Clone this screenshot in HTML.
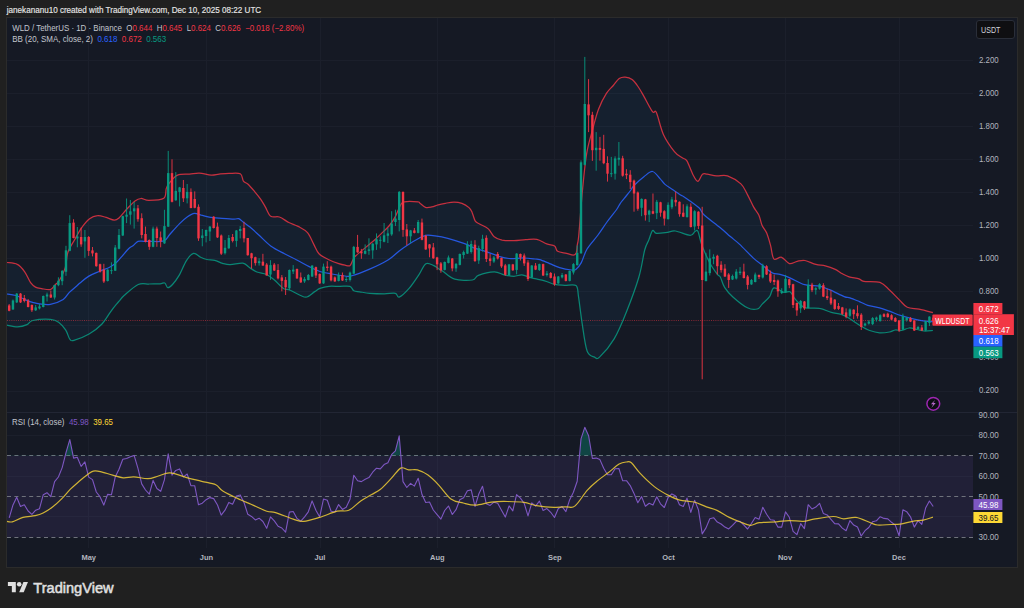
<!DOCTYPE html>
<html><head><meta charset="utf-8"><style>
html,body{margin:0;padding:0;background:#202020;width:1024px;height:608px;overflow:hidden}
svg{position:absolute;left:0;top:0;font-family:"Liberation Sans", sans-serif}
text{white-space:pre}
</style></head><body>
<svg width="1024" height="608" viewBox="0 0 1024 608">
<rect x="6.5" y="17.5" width="1011" height="550" fill="#151924" stroke="#2b2b2b" stroke-width="1"/>
<line x1="88.5" y1="18" x2="88.5" y2="548" stroke="#1b1f2b" stroke-width="1"/>
<line x1="206.5" y1="18" x2="206.5" y2="548" stroke="#1b1f2b" stroke-width="1"/>
<line x1="320.5" y1="18" x2="320.5" y2="548" stroke="#1b1f2b" stroke-width="1"/>
<line x1="437.5" y1="18" x2="437.5" y2="548" stroke="#1b1f2b" stroke-width="1"/>
<line x1="554.5" y1="18" x2="554.5" y2="548" stroke="#1b1f2b" stroke-width="1"/>
<line x1="668.5" y1="18" x2="668.5" y2="548" stroke="#1b1f2b" stroke-width="1"/>
<line x1="785.5" y1="18" x2="785.5" y2="548" stroke="#1b1f2b" stroke-width="1"/>
<line x1="899.5" y1="18" x2="899.5" y2="548" stroke="#1b1f2b" stroke-width="1"/>
<line x1="7" y1="391.5" x2="973" y2="391.5" stroke="#1b1f2b" stroke-width="1"/>
<line x1="7" y1="358.5" x2="973" y2="358.5" stroke="#1b1f2b" stroke-width="1"/>
<line x1="7" y1="325.5" x2="973" y2="325.5" stroke="#1b1f2b" stroke-width="1"/>
<line x1="7" y1="291.5" x2="973" y2="291.5" stroke="#1b1f2b" stroke-width="1"/>
<line x1="7" y1="258.5" x2="973" y2="258.5" stroke="#1b1f2b" stroke-width="1"/>
<line x1="7" y1="225.5" x2="973" y2="225.5" stroke="#1b1f2b" stroke-width="1"/>
<line x1="7" y1="192.5" x2="973" y2="192.5" stroke="#1b1f2b" stroke-width="1"/>
<line x1="7" y1="159.5" x2="973" y2="159.5" stroke="#1b1f2b" stroke-width="1"/>
<line x1="7" y1="126.5" x2="973" y2="126.5" stroke="#1b1f2b" stroke-width="1"/>
<line x1="7" y1="93.5" x2="973" y2="93.5" stroke="#1b1f2b" stroke-width="1"/>
<line x1="7" y1="60.5" x2="973" y2="60.5" stroke="#1b1f2b" stroke-width="1"/>
<line x1="7" y1="435.5" x2="973" y2="435.5" stroke="#1b1f2b" stroke-width="1"/>
<line x1="7" y1="476.5" x2="973" y2="476.5" stroke="#1b1f2b" stroke-width="1"/>
<line x1="7" y1="516.5" x2="973" y2="516.5" stroke="#1b1f2b" stroke-width="1"/>
<line x1="7" y1="412.5" x2="1017" y2="412.5" stroke="#222634" stroke-width="1"/>
<polygon points="7.0,262.5 17.3,264.4 24.7,271.8 30.6,282.7 35.5,287.1 41.5,288.6 50.3,289.6 55.3,284.7 59.2,280.7 65.2,267.9 67.9,252.3 74.8,239.4 81.7,227.6 89.6,218.7 97.5,215.7 105.4,217.2 114.3,220.2 119.2,217.7 127.1,208.8 135.0,200.9 141.0,198.5 148.8,200.4 163.8,198.3 166.3,188.4 169.7,182.5 177.6,175.1 189.5,174.1 199.4,173.1 211.2,175.1 219.1,174.1 229.0,173.4 240.3,173.8 243.4,181.1 248.1,184.2 254.4,191.3 260.6,199.1 265.3,206.9 270.8,216.3 279.4,217.0 288.8,222.5 298.1,226.4 307.5,232.7 313.8,244.4 319.0,253.8 328.9,259.7 338.8,263.6 345.0,265.1 349.9,265.7 352.8,260.2 355.8,255.8 369.6,244.2 374.6,240.0 381.5,233.4 389.4,225.5 395.3,216.6 400.2,205.7 404.2,201.8 418.0,201.8 420.0,203.3 425.5,207.3 431.8,206.9 438.2,204.9 445.3,203.3 454.0,202.0 461.9,203.3 469.0,207.6 472.1,212.4 475.3,221.1 480.0,224.2 488.3,228.9 494.2,236.8 502.1,240.2 514.0,240.7 525.8,239.7 536.8,239.4 546.7,243.9 554.6,245.9 557.6,251.3 566.5,253.3 573.4,255.2 576.3,252.8 577.3,244.9 578.8,235.0 582.5,190.0 586.7,153.3 592.6,129.6 598.5,109.2 606.4,93.4 613.3,85.5 619.2,78.6 625.2,77.1 632.1,79.6 638.0,86.5 643.9,96.4 652.5,111.7 656.4,112.5 663.4,134.4 674.4,151.6 682.2,157.8 686.9,160.9 693.1,175.0 697.8,181.3 702.5,174.2 707.2,174.2 716.6,175.8 727.5,175.8 740.9,183.9 747.2,194.1 753.4,206.6 758.9,215.2 762.0,225.3 766.7,233.1 770.6,245.6 773.8,258.9 781.6,257.3 789.4,263.6 797.2,261.3 805.0,260.5 815.9,264.4 825.3,265.9 834.7,269.1 842.5,273.8 849.1,276.8 859.0,278.8 863.9,281.3 880.0,282.3 889.5,290.0 899.4,299.9 907.3,307.3 919.1,309.2 932.9,312.7 932.9,330.5 924.0,331.0 917.1,329.5 909.2,328.0 901.3,330.5 895.4,330.0 889.5,332.0 879.6,332.9 869.7,330.5 859.9,325.5 849.1,318.3 841.2,314.4 831.3,312.4 819.5,308.4 805.7,307.9 799.7,304.0 794.8,298.6 790.0,291.8 783.8,292.3 773.9,287.9 769.6,296.7 762.2,304.1 757.3,309.0 747.4,307.8 732.6,296.7 724.6,287.4 720.3,277.0 717.6,274.6 709.7,262.7 701.9,245.3 698.0,231.5 695.0,231.5 690.1,235.4 675.3,231.0 667.4,232.4 656.5,233.4 652.6,230.5 648.8,240.0 644.7,250.0 638.9,277.0 626.6,311.5 614.3,338.6 599.5,357.1 594.5,357.1 587.1,351.0 582.2,323.8 578.5,296.7 576.0,285.6 564.5,285.3 554.6,284.4 544.7,280.9 535.0,278.7 529.8,277.3 521.9,274.8 514.0,276.3 504.1,274.8 494.2,271.8 478.4,275.3 472.5,280.0 454.7,279.2 442.9,271.3 440.0,269.6 433.8,265.7 425.9,263.7 419.0,274.6 409.1,288.4 399.2,297.1 395.3,293.3 384.4,293.8 369.6,293.3 359.7,291.8 353.8,290.8 349.9,286.4 340.0,286.4 328.9,286.3 320.0,288.4 314.7,291.6 306.9,297.0 300.6,295.5 289.7,290.0 283.4,288.4 274.1,279.8 266.3,274.4 256.9,272.0 249.1,267.3 242.8,263.1 230.3,264.7 222.5,263.4 214.7,260.3 206.9,259.5 200.6,257.2 193.6,253.3 186.6,260.3 178.8,275.9 172.5,284.5 167.8,287.7 164.7,283.0 160.0,283.8 149.1,284.0 138.2,284.5 124.4,295.3 119.6,300.6 116.5,304.2 110.2,312.3 102.0,324.0 89.1,334.0 73.9,340.4 69.8,339.2 65.6,329.9 58.6,322.2 50.4,319.3 32.8,320.5 27.0,324.6 17.6,326.9 7.0,325.2" fill="#2196f3" fill-opacity="0.06"/>
<line x1="7" y1="320.5" x2="973" y2="320.5" stroke="#f23645" stroke-width="1" stroke-dasharray="1 1.2" opacity="0.5"/>
<path d="M7.0,262.5 C8.7,262.8 14.4,262.8 17.3,264.4 C20.2,265.9 22.5,268.8 24.7,271.8 C26.9,274.9 28.8,280.1 30.6,282.7 C32.4,285.2 33.7,286.1 35.5,287.1 C37.3,288.1 39.0,288.2 41.5,288.6 C44.0,289.0 48.0,290.2 50.3,289.6 C52.6,289.0 53.8,286.2 55.3,284.7 C56.8,283.2 57.6,283.5 59.2,280.7 C60.9,277.9 63.8,272.6 65.2,267.9 C66.7,263.2 66.3,257.1 67.9,252.3 C69.5,247.6 72.5,243.5 74.8,239.4 C77.1,235.3 79.2,231.1 81.7,227.6 C84.2,224.1 87.0,220.7 89.6,218.7 C92.2,216.7 94.9,215.9 97.5,215.7 C100.1,215.4 102.6,216.4 105.4,217.2 C108.2,217.9 112.0,220.1 114.3,220.2 C116.6,220.3 117.1,219.6 119.2,217.7 C121.3,215.8 124.5,211.6 127.1,208.8 C129.7,206.0 132.7,202.6 135.0,200.9 C137.3,199.2 138.7,198.6 141.0,198.5 C143.3,198.4 145.0,200.4 148.8,200.4 C152.6,200.4 160.9,200.3 163.8,198.3 C166.7,196.3 165.3,191.0 166.3,188.4 C167.3,185.8 167.8,184.7 169.7,182.5 C171.6,180.3 174.3,176.5 177.6,175.1 C180.9,173.7 185.9,174.4 189.5,174.1 C193.1,173.8 195.8,172.9 199.4,173.1 C203.0,173.3 207.9,174.9 211.2,175.1 C214.5,175.3 216.1,174.4 219.1,174.1 C222.1,173.8 225.5,173.4 229.0,173.4 C232.5,173.4 237.9,172.5 240.3,173.8 C242.7,175.1 242.1,179.4 243.4,181.1 C244.7,182.8 246.3,182.5 248.1,184.2 C249.9,185.9 252.3,188.8 254.4,191.3 C256.5,193.8 258.8,196.5 260.6,199.1 C262.4,201.7 263.6,204.0 265.3,206.9 C267.0,209.8 268.5,214.6 270.8,216.3 C273.1,218.0 276.4,216.0 279.4,217.0 C282.4,218.0 285.7,220.9 288.8,222.5 C291.9,224.1 295.0,224.7 298.1,226.4 C301.2,228.1 304.9,229.7 307.5,232.7 C310.1,235.7 311.9,240.9 313.8,244.4 C315.7,247.9 316.5,251.2 319.0,253.8 C321.5,256.4 325.6,258.1 328.9,259.7 C332.2,261.3 336.1,262.7 338.8,263.6 C341.5,264.5 343.1,264.8 345.0,265.1 C346.9,265.5 348.6,266.5 349.9,265.7 C351.2,264.9 351.8,261.8 352.8,260.2 C353.8,258.6 353.0,258.5 355.8,255.8 C358.6,253.1 366.5,246.8 369.6,244.2 C372.7,241.6 372.6,241.8 374.6,240.0 C376.6,238.2 379.0,235.8 381.5,233.4 C384.0,231.0 387.1,228.3 389.4,225.5 C391.7,222.7 393.5,219.9 395.3,216.6 C397.1,213.3 398.7,208.2 400.2,205.7 C401.7,203.2 401.2,202.5 404.2,201.8 C407.2,201.2 415.4,201.6 418.0,201.8 C420.6,202.1 418.8,202.4 420.0,203.3 C421.2,204.2 423.5,206.7 425.5,207.3 C427.5,207.9 429.7,207.3 431.8,206.9 C433.9,206.5 435.9,205.5 438.2,204.9 C440.4,204.3 442.7,203.8 445.3,203.3 C447.9,202.8 451.2,202.0 454.0,202.0 C456.8,202.0 459.4,202.4 461.9,203.3 C464.4,204.2 467.3,206.1 469.0,207.6 C470.7,209.1 471.1,210.2 472.1,212.4 C473.2,214.7 474.0,219.1 475.3,221.1 C476.6,223.1 477.8,222.9 480.0,224.2 C482.2,225.5 485.9,226.8 488.3,228.9 C490.7,231.0 491.9,234.9 494.2,236.8 C496.5,238.7 498.8,239.5 502.1,240.2 C505.4,240.8 510.1,240.8 514.0,240.7 C518.0,240.6 522.0,239.9 525.8,239.7 C529.6,239.5 533.3,238.7 536.8,239.4 C540.3,240.1 543.7,242.8 546.7,243.9 C549.7,245.0 552.8,244.7 554.6,245.9 C556.4,247.1 555.6,250.1 557.6,251.3 C559.6,252.5 563.9,252.7 566.5,253.3 C569.1,254.0 571.8,255.3 573.4,255.2 C575.0,255.1 575.6,254.5 576.3,252.8 C576.9,251.1 576.9,247.9 577.3,244.9 C577.7,241.9 577.9,244.2 578.8,235.0 C579.7,225.8 581.2,203.6 582.5,190.0 C583.8,176.4 585.0,163.4 586.7,153.3 C588.4,143.2 590.6,136.9 592.6,129.6 C594.6,122.2 596.2,115.2 598.5,109.2 C600.8,103.2 603.9,97.4 606.4,93.4 C608.9,89.5 611.2,88.0 613.3,85.5 C615.4,83.0 617.2,80.0 619.2,78.6 C621.2,77.2 623.1,76.9 625.2,77.1 C627.4,77.3 630.0,78.0 632.1,79.6 C634.2,81.2 636.0,83.7 638.0,86.5 C640.0,89.3 641.5,92.2 643.9,96.4 C646.3,100.6 650.4,109.0 652.5,111.7 C654.6,114.4 654.6,108.7 656.4,112.5 C658.2,116.3 660.4,127.9 663.4,134.4 C666.4,140.9 671.3,147.7 674.4,151.6 C677.5,155.5 680.1,156.2 682.2,157.8 C684.3,159.4 685.1,158.0 686.9,160.9 C688.7,163.8 691.3,171.6 693.1,175.0 C694.9,178.4 696.2,181.4 697.8,181.3 C699.4,181.2 700.9,175.4 702.5,174.2 C704.1,173.0 704.9,173.9 707.2,174.2 C709.6,174.5 713.2,175.5 716.6,175.8 C720.0,176.1 723.5,174.5 727.5,175.8 C731.5,177.2 737.6,180.9 740.9,183.9 C744.2,186.9 745.1,190.3 747.2,194.1 C749.3,197.9 751.5,203.1 753.4,206.6 C755.3,210.1 757.5,212.1 758.9,215.2 C760.3,218.3 760.7,222.3 762.0,225.3 C763.3,228.3 765.3,229.7 766.7,233.1 C768.1,236.5 769.4,241.3 770.6,245.6 C771.8,249.9 772.0,256.9 773.8,258.9 C775.6,260.8 779.0,256.5 781.6,257.3 C784.2,258.1 786.8,262.9 789.4,263.6 C792.0,264.3 794.6,261.8 797.2,261.3 C799.8,260.8 801.9,260.0 805.0,260.5 C808.1,261.0 812.5,263.5 815.9,264.4 C819.3,265.3 822.2,265.1 825.3,265.9 C828.4,266.7 831.8,267.8 834.7,269.1 C837.6,270.4 840.1,272.5 842.5,273.8 C844.9,275.1 846.4,276.0 849.1,276.8 C851.9,277.6 856.5,278.1 859.0,278.8 C861.5,279.6 860.4,280.7 863.9,281.3 C867.4,281.9 875.7,280.9 880.0,282.3 C884.3,283.8 886.3,287.1 889.5,290.0 C892.7,292.9 896.4,297.0 899.4,299.9 C902.4,302.8 904.0,305.8 907.3,307.3 C910.6,308.9 914.8,308.3 919.1,309.2 C923.4,310.1 930.6,312.1 932.9,312.7" fill="none" stroke="#f23645" stroke-opacity="0.8" stroke-width="1.25" stroke-linejoin="round"/>
<path d="M7.0,325.2 C8.8,325.5 14.3,327.0 17.6,326.9 C20.9,326.8 24.5,325.7 27.0,324.6 C29.5,323.5 28.9,321.4 32.8,320.5 C36.7,319.6 46.1,319.0 50.4,319.3 C54.7,319.6 56.1,320.4 58.6,322.2 C61.1,324.0 63.7,327.1 65.6,329.9 C67.5,332.7 68.4,337.4 69.8,339.2 C71.2,340.9 70.7,341.3 73.9,340.4 C77.1,339.5 84.4,336.7 89.1,334.0 C93.8,331.3 98.5,327.6 102.0,324.0 C105.5,320.4 107.8,315.6 110.2,312.3 C112.6,309.0 114.9,306.1 116.5,304.2 C118.1,302.2 118.3,302.1 119.6,300.6 C120.9,299.1 121.3,298.0 124.4,295.3 C127.5,292.6 134.1,286.4 138.2,284.5 C142.3,282.6 145.5,284.1 149.1,284.0 C152.7,283.9 157.4,284.0 160.0,283.8 C162.6,283.6 163.4,282.4 164.7,283.0 C166.0,283.6 166.5,287.4 167.8,287.7 C169.1,287.9 170.7,286.5 172.5,284.5 C174.3,282.5 176.5,279.9 178.8,275.9 C181.2,271.9 184.1,264.1 186.6,260.3 C189.1,256.5 191.3,253.8 193.6,253.3 C195.9,252.8 198.4,256.2 200.6,257.2 C202.8,258.2 204.6,259.0 206.9,259.5 C209.2,260.0 212.1,259.7 214.7,260.3 C217.3,260.9 219.9,262.7 222.5,263.4 C225.1,264.1 226.9,264.8 230.3,264.7 C233.7,264.6 239.7,262.7 242.8,263.1 C245.9,263.5 246.8,265.8 249.1,267.3 C251.4,268.8 254.0,270.8 256.9,272.0 C259.8,273.2 263.4,273.1 266.3,274.4 C269.2,275.7 271.2,277.5 274.1,279.8 C277.0,282.1 280.8,286.7 283.4,288.4 C286.0,290.1 286.8,288.8 289.7,290.0 C292.6,291.2 297.7,294.3 300.6,295.5 C303.5,296.7 304.5,297.6 306.9,297.0 C309.2,296.4 312.5,293.0 314.7,291.6 C316.9,290.2 317.6,289.3 320.0,288.4 C322.4,287.5 325.6,286.6 328.9,286.3 C332.2,286.0 336.5,286.4 340.0,286.4 C343.5,286.4 347.6,285.7 349.9,286.4 C352.2,287.1 352.2,289.9 353.8,290.8 C355.4,291.7 357.1,291.4 359.7,291.8 C362.3,292.2 365.5,293.0 369.6,293.3 C373.7,293.6 380.1,293.8 384.4,293.8 C388.7,293.8 392.8,292.8 395.3,293.3 C397.8,293.9 396.9,297.9 399.2,297.1 C401.5,296.3 405.8,292.1 409.1,288.4 C412.4,284.6 416.2,278.7 419.0,274.6 C421.8,270.5 423.4,265.2 425.9,263.7 C428.4,262.2 431.4,264.7 433.8,265.7 C436.2,266.7 438.5,268.7 440.0,269.6 C441.5,270.5 440.4,269.7 442.9,271.3 C445.3,272.9 449.8,277.8 454.7,279.2 C459.6,280.6 468.6,280.6 472.5,280.0 C476.4,279.4 474.8,276.7 478.4,275.3 C482.0,273.9 489.9,271.9 494.2,271.8 C498.5,271.7 500.8,274.1 504.1,274.8 C507.4,275.6 511.0,276.3 514.0,276.3 C517.0,276.3 519.3,274.6 521.9,274.8 C524.5,275.0 527.6,276.7 529.8,277.3 C532.0,277.9 532.5,278.1 535.0,278.7 C537.5,279.3 541.4,279.9 544.7,280.9 C548.0,281.8 551.3,283.7 554.6,284.4 C557.9,285.1 560.9,285.1 564.5,285.3 C568.1,285.5 573.7,283.7 576.0,285.6 C578.3,287.5 577.5,290.3 578.5,296.7 C579.5,303.1 580.8,314.8 582.2,323.8 C583.6,332.9 585.1,345.4 587.1,351.0 C589.1,356.6 592.4,356.1 594.5,357.1 C596.6,358.1 596.2,360.2 599.5,357.1 C602.8,354.0 609.8,346.2 614.3,338.6 C618.8,331.0 622.5,321.8 626.6,311.5 C630.7,301.2 635.9,287.2 638.9,277.0 C641.9,266.8 643.1,256.2 644.7,250.0 C646.4,243.8 647.5,243.2 648.8,240.0 C650.1,236.8 651.3,231.6 652.6,230.5 C653.9,229.4 654.0,233.1 656.5,233.4 C659.0,233.7 664.3,232.8 667.4,232.4 C670.5,232.0 671.5,230.5 675.3,231.0 C679.1,231.5 686.8,235.3 690.1,235.4 C693.4,235.5 693.7,232.2 695.0,231.5 C696.3,230.8 696.9,229.2 698.0,231.5 C699.1,233.8 699.9,240.1 701.9,245.3 C703.9,250.5 707.1,257.8 709.7,262.7 C712.3,267.6 715.8,272.2 717.6,274.6 C719.4,277.0 719.1,274.9 720.3,277.0 C721.5,279.1 722.5,284.1 724.6,287.4 C726.7,290.7 728.8,293.3 732.6,296.7 C736.4,300.1 743.3,305.8 747.4,307.8 C751.5,309.9 754.8,309.6 757.3,309.0 C759.8,308.4 760.2,306.2 762.2,304.1 C764.2,302.1 767.7,299.4 769.6,296.7 C771.5,294.0 771.5,288.6 773.9,287.9 C776.3,287.2 781.1,291.6 783.8,292.3 C786.5,293.0 788.2,290.8 790.0,291.8 C791.8,292.9 793.2,296.6 794.8,298.6 C796.4,300.6 797.9,302.4 799.7,304.0 C801.5,305.6 802.4,307.2 805.7,307.9 C809.0,308.6 815.2,307.6 819.5,308.4 C823.8,309.1 827.7,311.4 831.3,312.4 C834.9,313.4 838.2,313.4 841.2,314.4 C844.2,315.4 846.0,316.4 849.1,318.3 C852.2,320.2 856.5,323.5 859.9,325.5 C863.3,327.5 866.4,329.3 869.7,330.5 C873.0,331.7 876.3,332.6 879.6,332.9 C882.9,333.1 886.9,332.5 889.5,332.0 C892.1,331.5 893.4,330.2 895.4,330.0 C897.4,329.8 899.0,330.8 901.3,330.5 C903.6,330.2 906.6,328.2 909.2,328.0 C911.8,327.8 914.6,329.0 917.1,329.5 C919.6,330.0 921.4,330.8 924.0,331.0 C926.6,331.2 931.4,330.6 932.9,330.5" fill="none" stroke="#089981" stroke-opacity="0.85" stroke-width="1.25" stroke-linejoin="round"/>
<path d="M7.0,294.0 C8.5,294.2 12.9,294.6 15.8,295.5 C18.8,296.4 21.9,298.4 24.7,299.5 C27.5,300.6 30.1,301.7 32.6,302.4 C35.1,303.1 36.5,303.6 39.5,303.9 C42.5,304.2 46.3,305.1 50.3,304.4 C54.2,303.7 60.1,301.5 63.2,299.5 C66.3,297.5 66.8,294.9 69.1,292.6 C71.4,290.3 75.2,287.3 77.0,285.7 C78.8,284.1 78.0,284.6 80.0,283.0 C82.0,281.4 85.6,278.1 88.9,276.1 C92.2,274.1 96.2,272.7 99.7,271.2 C103.2,269.7 107.0,268.5 109.6,267.2 C112.2,265.9 113.5,265.0 115.5,263.3 C117.5,261.6 119.2,259.3 121.5,256.8 C123.8,254.3 127.1,250.2 129.1,248.3 C131.1,246.4 131.8,246.7 133.3,245.5 C134.8,244.3 136.2,242.1 138.0,241.4 C139.8,240.7 141.9,241.4 143.9,241.4 C145.9,241.4 146.7,241.5 150.0,241.4 C153.3,241.3 160.5,242.1 163.8,240.9 C167.1,239.8 167.1,237.4 169.7,234.5 C172.3,231.6 176.6,226.6 179.6,223.6 C182.6,220.6 185.0,218.4 187.5,216.7 C190.0,215.0 192.1,213.6 194.4,213.3 C196.7,213.1 198.8,214.5 201.3,215.2 C203.8,215.8 206.2,216.7 209.2,217.2 C212.2,217.7 215.0,217.9 219.1,218.2 C223.2,218.5 230.6,219.1 233.9,219.2 C237.2,219.3 237.2,218.1 238.8,218.7 C240.5,219.3 241.9,221.2 243.8,222.6 C245.7,224.0 247.5,225.0 250.0,227.1 C252.5,229.2 255.4,231.9 258.8,235.0 C262.2,238.1 266.4,242.8 270.7,245.9 C275.0,249.0 280.2,251.5 284.5,253.8 C288.8,256.1 292.2,257.6 296.3,259.7 C300.4,261.8 305.2,264.6 309.2,266.6 C313.1,268.6 316.2,270.3 320.0,271.5 C323.8,272.7 327.7,273.2 331.9,274.0 C336.1,274.8 341.8,275.7 345.0,276.0 C348.2,276.3 346.8,277.1 350.9,276.0 C355.0,274.9 363.4,271.8 369.6,269.1 C375.9,266.4 383.5,262.7 388.4,259.7 C393.3,256.7 395.9,253.4 399.2,250.9 C402.5,248.4 404.8,246.8 408.1,244.7 C411.4,242.6 416.0,239.9 419.0,238.3 C422.0,236.7 423.2,235.7 425.9,235.3 C428.6,234.9 431.4,235.3 435.0,235.8 C438.6,236.3 442.9,237.0 447.8,238.3 C452.7,239.6 460.2,242.1 464.6,243.7 C469.1,245.3 470.9,246.8 474.5,248.1 C478.1,249.4 482.2,250.2 486.3,251.6 C490.4,253.0 495.4,255.3 499.2,256.5 C503.0,257.6 504.9,258.2 509.0,258.5 C513.1,258.8 519.5,257.9 523.8,258.0 C528.1,258.1 532.3,258.7 535.0,259.0 C537.7,259.3 537.3,258.9 539.8,259.7 C542.2,260.5 546.4,262.3 549.7,263.6 C553.0,264.9 556.0,266.5 559.6,267.6 C563.2,268.7 568.7,269.7 571.4,270.0 C574.1,270.3 574.1,270.8 575.8,269.6 C577.4,268.4 579.4,266.1 581.3,262.6 C583.2,259.1 584.4,253.4 587.2,248.8 C590.0,244.2 594.7,239.5 598.0,235.0 C601.3,230.5 604.0,226.2 607.0,222.0 C610.0,217.8 614.1,213.0 616.3,210.0 C618.5,207.0 618.7,205.7 620.0,203.8 C621.3,201.9 622.4,200.7 624.2,198.4 C626.0,196.1 629.3,192.2 630.9,190.0 C632.5,187.8 631.8,187.7 634.0,185.5 C636.2,183.3 640.8,179.0 643.9,176.7 C647.0,174.4 649.8,171.2 652.5,171.5 C655.2,171.8 657.9,176.4 660.0,178.6 C662.1,180.8 662.8,182.5 665.0,184.4 C667.2,186.3 670.7,188.2 673.3,190.0 C675.9,191.8 678.8,193.8 680.6,195.0 C682.4,196.2 681.1,194.8 684.2,196.9 C687.3,199.0 695.7,204.8 699.0,207.8 C702.3,210.8 700.4,211.4 703.9,214.7 C707.4,218.0 715.6,223.9 720.0,227.5 C724.4,231.1 726.8,233.5 730.0,236.3 C733.2,239.1 735.5,240.5 739.4,244.1 C743.3,247.7 749.5,254.5 753.4,258.1 C757.3,261.7 759.8,263.2 763.0,265.7 C766.2,268.2 769.7,271.6 772.5,273.0 C775.3,274.4 777.1,273.6 780.0,274.4 C782.9,275.2 785.8,276.1 789.9,277.8 C794.0,279.5 799.8,283.3 804.7,284.7 C809.6,286.1 815.4,285.4 819.5,286.2 C823.6,287.0 825.3,288.0 829.4,289.7 C833.5,291.4 840.8,295.2 844.2,296.6 C847.6,298.0 847.4,297.0 850.0,297.9 C852.6,298.8 856.9,300.6 859.9,301.8 C862.9,303.0 864.5,304.3 867.8,305.3 C871.1,306.3 876.0,306.8 879.6,307.8 C883.2,308.8 885.9,309.9 889.5,311.2 C893.1,312.5 897.2,314.4 901.3,315.7 C905.4,317.0 910.2,318.2 914.2,319.1 C918.2,320.0 921.9,320.7 925.0,321.1 C928.1,321.5 931.6,321.5 932.9,321.6" fill="none" stroke="#2962ff" stroke-opacity="0.85" stroke-width="1.25" stroke-linejoin="round"/>
<line x1="9.17" y1="304.0" x2="9.17" y2="311.3" stroke="#f23645" stroke-width="0.9"/>
<rect x="7.97" y="305.4" width="2.4" height="5.40" fill="#f23645"/>
<line x1="12.96" y1="299.5" x2="12.96" y2="310.0" stroke="#089981" stroke-width="0.9"/>
<rect x="11.76" y="300.5" width="2.4" height="8.90" fill="#089981"/>
<line x1="16.75" y1="293.0" x2="16.75" y2="303.0" stroke="#089981" stroke-width="0.9"/>
<rect x="15.55" y="293.6" width="2.4" height="8.80" fill="#089981"/>
<line x1="20.53" y1="293.0" x2="20.53" y2="303.0" stroke="#f23645" stroke-width="0.9"/>
<rect x="19.33" y="293.6" width="2.4" height="8.80" fill="#f23645"/>
<line x1="24.32" y1="295.0" x2="24.32" y2="302.4" stroke="#f23645" stroke-width="0.9"/>
<rect x="23.12" y="298.0" width="2.4" height="3.00" fill="#f23645"/>
<line x1="28.11" y1="299.0" x2="28.11" y2="307.4" stroke="#f23645" stroke-width="0.9"/>
<rect x="26.91" y="300.5" width="2.4" height="6.50" fill="#f23645"/>
<line x1="31.90" y1="304.4" x2="31.90" y2="312.0" stroke="#f23645" stroke-width="0.9"/>
<rect x="30.70" y="305.0" width="2.4" height="5.30" fill="#f23645"/>
<line x1="35.68" y1="305.0" x2="35.68" y2="311.0" stroke="#089981" stroke-width="0.9"/>
<rect x="34.48" y="307.4" width="2.4" height="2.90" fill="#089981"/>
<line x1="39.47" y1="304.0" x2="39.47" y2="309.4" stroke="#089981" stroke-width="0.9"/>
<rect x="38.27" y="306.4" width="2.4" height="2.00" fill="#089981"/>
<line x1="43.26" y1="295.5" x2="43.26" y2="307.4" stroke="#089981" stroke-width="0.9"/>
<rect x="42.06" y="296.0" width="2.4" height="11.00" fill="#089981"/>
<line x1="47.04" y1="292.6" x2="47.04" y2="301.5" stroke="#089981" stroke-width="0.9"/>
<rect x="45.84" y="294.5" width="2.4" height="2.00" fill="#089981"/>
<line x1="50.83" y1="290.6" x2="50.83" y2="298.0" stroke="#f23645" stroke-width="0.9"/>
<rect x="49.63" y="294.5" width="2.4" height="3.00" fill="#f23645"/>
<line x1="54.62" y1="284.7" x2="54.62" y2="299.5" stroke="#089981" stroke-width="0.9"/>
<rect x="53.42" y="285.0" width="2.4" height="12.50" fill="#089981"/>
<line x1="58.40" y1="277.3" x2="58.40" y2="286.2" stroke="#089981" stroke-width="0.9"/>
<rect x="57.20" y="280.7" width="2.4" height="4.50" fill="#089981"/>
<line x1="62.19" y1="270.0" x2="62.19" y2="285.2" stroke="#089981" stroke-width="0.9"/>
<rect x="60.99" y="270.9" width="2.4" height="10.30" fill="#089981"/>
<line x1="65.98" y1="245.8" x2="65.98" y2="275.8" stroke="#089981" stroke-width="0.9"/>
<rect x="64.78" y="250.3" width="2.4" height="21.50" fill="#089981"/>
<line x1="69.77" y1="215.2" x2="69.77" y2="251.3" stroke="#089981" stroke-width="0.9"/>
<rect x="68.56" y="223.1" width="2.4" height="27.70" fill="#089981"/>
<line x1="73.55" y1="219.2" x2="73.55" y2="238.4" stroke="#f23645" stroke-width="0.9"/>
<rect x="72.35" y="222.6" width="2.4" height="15.40" fill="#f23645"/>
<line x1="77.34" y1="227.0" x2="77.34" y2="247.3" stroke="#089981" stroke-width="0.9"/>
<rect x="76.14" y="236.5" width="2.4" height="1.90" fill="#089981"/>
<line x1="81.13" y1="227.6" x2="81.13" y2="246.8" stroke="#f23645" stroke-width="0.9"/>
<rect x="79.93" y="237.0" width="2.4" height="7.40" fill="#f23645"/>
<line x1="84.91" y1="230.0" x2="84.91" y2="257.8" stroke="#089981" stroke-width="0.9"/>
<rect x="83.71" y="237.0" width="2.4" height="4.40" fill="#089981"/>
<line x1="88.70" y1="236.0" x2="88.70" y2="255.9" stroke="#f23645" stroke-width="0.9"/>
<rect x="87.50" y="237.0" width="2.4" height="13.90" fill="#f23645"/>
<line x1="92.49" y1="247.0" x2="92.49" y2="256.4" stroke="#f23645" stroke-width="0.9"/>
<rect x="91.29" y="250.4" width="2.4" height="3.00" fill="#f23645"/>
<line x1="96.27" y1="252.5" x2="96.27" y2="266.7" stroke="#f23645" stroke-width="0.9"/>
<rect x="95.07" y="252.9" width="2.4" height="13.30" fill="#f23645"/>
<line x1="100.06" y1="263.7" x2="100.06" y2="272.6" stroke="#f23645" stroke-width="0.9"/>
<rect x="98.86" y="264.2" width="2.4" height="7.50" fill="#f23645"/>
<line x1="103.85" y1="263.8" x2="103.85" y2="283.0" stroke="#f23645" stroke-width="0.9"/>
<rect x="102.65" y="269.7" width="2.4" height="11.80" fill="#f23645"/>
<line x1="107.64" y1="269.2" x2="107.64" y2="281.5" stroke="#089981" stroke-width="0.9"/>
<rect x="106.44" y="269.7" width="2.4" height="11.30" fill="#089981"/>
<line x1="111.42" y1="262.3" x2="111.42" y2="274.1" stroke="#089981" stroke-width="0.9"/>
<rect x="110.22" y="270.2" width="2.4" height="0.90" fill="#089981"/>
<line x1="115.21" y1="245.0" x2="115.21" y2="271.0" stroke="#089981" stroke-width="0.9"/>
<rect x="114.01" y="247.5" width="2.4" height="23.20" fill="#089981"/>
<line x1="119.00" y1="229.0" x2="119.00" y2="249.3" stroke="#089981" stroke-width="0.9"/>
<rect x="117.80" y="235.0" width="2.4" height="13.80" fill="#089981"/>
<line x1="122.78" y1="215.7" x2="122.78" y2="236.0" stroke="#089981" stroke-width="0.9"/>
<rect x="121.58" y="216.2" width="2.4" height="19.30" fill="#089981"/>
<line x1="126.57" y1="198.5" x2="126.57" y2="223.1" stroke="#089981" stroke-width="0.9"/>
<rect x="125.37" y="214.7" width="2.4" height="2.00" fill="#089981"/>
<line x1="130.36" y1="200.0" x2="130.36" y2="224.6" stroke="#089981" stroke-width="0.9"/>
<rect x="129.16" y="211.3" width="2.4" height="3.40" fill="#089981"/>
<line x1="134.14" y1="202.0" x2="134.14" y2="228.6" stroke="#089981" stroke-width="0.9"/>
<rect x="132.94" y="208.3" width="2.4" height="3.00" fill="#089981"/>
<line x1="137.93" y1="205.0" x2="137.93" y2="221.7" stroke="#f23645" stroke-width="0.9"/>
<rect x="136.73" y="208.3" width="2.4" height="10.90" fill="#f23645"/>
<line x1="141.72" y1="213.3" x2="141.72" y2="238.4" stroke="#f23645" stroke-width="0.9"/>
<rect x="140.52" y="218.2" width="2.4" height="16.80" fill="#f23645"/>
<line x1="145.50" y1="226.6" x2="145.50" y2="242.4" stroke="#f23645" stroke-width="0.9"/>
<rect x="144.31" y="234.0" width="2.4" height="7.90" fill="#f23645"/>
<line x1="149.29" y1="239.4" x2="149.29" y2="249.8" stroke="#f23645" stroke-width="0.9"/>
<rect x="148.09" y="240.0" width="2.4" height="6.80" fill="#f23645"/>
<line x1="153.08" y1="226.6" x2="153.08" y2="247.3" stroke="#089981" stroke-width="0.9"/>
<rect x="151.88" y="228.6" width="2.4" height="18.20" fill="#089981"/>
<line x1="156.87" y1="226.6" x2="156.87" y2="246.8" stroke="#f23645" stroke-width="0.9"/>
<rect x="155.67" y="228.6" width="2.4" height="9.40" fill="#f23645"/>
<line x1="160.65" y1="231.5" x2="160.65" y2="247.3" stroke="#f23645" stroke-width="0.9"/>
<rect x="159.45" y="237.4" width="2.4" height="4.00" fill="#f23645"/>
<line x1="164.44" y1="209.8" x2="164.44" y2="243.9" stroke="#089981" stroke-width="0.9"/>
<rect x="163.24" y="226.1" width="2.4" height="17.30" fill="#089981"/>
<line x1="168.23" y1="150.9" x2="168.23" y2="227.0" stroke="#089981" stroke-width="0.9"/>
<rect x="167.03" y="173.1" width="2.4" height="53.50" fill="#089981"/>
<line x1="172.01" y1="159.3" x2="172.01" y2="202.4" stroke="#f23645" stroke-width="0.9"/>
<rect x="170.81" y="173.1" width="2.4" height="28.70" fill="#f23645"/>
<line x1="175.80" y1="172.1" x2="175.80" y2="200.8" stroke="#089981" stroke-width="0.9"/>
<rect x="174.60" y="190.9" width="2.4" height="9.40" fill="#089981"/>
<line x1="179.59" y1="186.9" x2="179.59" y2="206.4" stroke="#089981" stroke-width="0.9"/>
<rect x="178.39" y="187.4" width="2.4" height="4.50" fill="#089981"/>
<line x1="183.38" y1="180.0" x2="183.38" y2="202.0" stroke="#f23645" stroke-width="0.9"/>
<rect x="182.18" y="188.0" width="2.4" height="10.30" fill="#f23645"/>
<line x1="187.16" y1="184.0" x2="187.16" y2="203.4" stroke="#089981" stroke-width="0.9"/>
<rect x="185.96" y="191.9" width="2.4" height="6.40" fill="#089981"/>
<line x1="190.95" y1="188.4" x2="190.95" y2="208.3" stroke="#f23645" stroke-width="0.9"/>
<rect x="189.75" y="191.9" width="2.4" height="16.10" fill="#f23645"/>
<line x1="194.74" y1="191.4" x2="194.74" y2="208.3" stroke="#f23645" stroke-width="0.9"/>
<rect x="193.54" y="199.0" width="2.4" height="8.80" fill="#f23645"/>
<line x1="198.52" y1="204.4" x2="198.52" y2="240.9" stroke="#f23645" stroke-width="0.9"/>
<rect x="197.32" y="206.8" width="2.4" height="31.60" fill="#f23645"/>
<line x1="202.31" y1="229.0" x2="202.31" y2="246.3" stroke="#089981" stroke-width="0.9"/>
<rect x="201.11" y="235.5" width="2.4" height="2.50" fill="#089981"/>
<line x1="206.10" y1="229.6" x2="206.10" y2="242.4" stroke="#089981" stroke-width="0.9"/>
<rect x="204.90" y="230.0" width="2.4" height="6.00" fill="#089981"/>
<line x1="209.88" y1="226.0" x2="209.88" y2="241.0" stroke="#089981" stroke-width="0.9"/>
<rect x="208.68" y="226.6" width="2.4" height="4.90" fill="#089981"/>
<line x1="213.67" y1="216.2" x2="213.67" y2="228.5" stroke="#f23645" stroke-width="0.9"/>
<rect x="212.47" y="216.7" width="2.4" height="11.30" fill="#f23645"/>
<line x1="217.46" y1="222.6" x2="217.46" y2="238.0" stroke="#f23645" stroke-width="0.9"/>
<rect x="216.26" y="226.6" width="2.4" height="10.80" fill="#f23645"/>
<line x1="221.25" y1="234.5" x2="221.25" y2="255.0" stroke="#f23645" stroke-width="0.9"/>
<rect x="220.05" y="235.5" width="2.4" height="18.20" fill="#f23645"/>
<line x1="225.03" y1="240.0" x2="225.03" y2="254.5" stroke="#089981" stroke-width="0.9"/>
<rect x="223.83" y="247.8" width="2.4" height="5.40" fill="#089981"/>
<line x1="228.82" y1="235.0" x2="228.82" y2="248.8" stroke="#089981" stroke-width="0.9"/>
<rect x="227.62" y="238.0" width="2.4" height="10.30" fill="#089981"/>
<line x1="232.61" y1="234.0" x2="232.61" y2="242.4" stroke="#f23645" stroke-width="0.9"/>
<rect x="231.41" y="237.0" width="2.4" height="3.90" fill="#f23645"/>
<line x1="236.39" y1="230.0" x2="236.39" y2="246.8" stroke="#089981" stroke-width="0.9"/>
<rect x="235.19" y="230.5" width="2.4" height="10.40" fill="#089981"/>
<line x1="240.18" y1="226.1" x2="240.18" y2="238.4" stroke="#089981" stroke-width="0.9"/>
<rect x="238.98" y="229.0" width="2.4" height="2.00" fill="#089981"/>
<line x1="243.97" y1="221.7" x2="243.97" y2="242.4" stroke="#f23645" stroke-width="0.9"/>
<rect x="242.77" y="228.0" width="2.4" height="10.40" fill="#f23645"/>
<line x1="247.75" y1="238.0" x2="247.75" y2="255.7" stroke="#f23645" stroke-width="0.9"/>
<rect x="246.55" y="238.0" width="2.4" height="17.20" fill="#f23645"/>
<line x1="251.54" y1="252.8" x2="251.54" y2="268.6" stroke="#f23645" stroke-width="0.9"/>
<rect x="250.34" y="253.3" width="2.4" height="4.90" fill="#f23645"/>
<line x1="255.33" y1="256.7" x2="255.33" y2="265.6" stroke="#f23645" stroke-width="0.9"/>
<rect x="254.13" y="257.2" width="2.4" height="5.90" fill="#f23645"/>
<line x1="259.12" y1="258.2" x2="259.12" y2="265.6" stroke="#089981" stroke-width="0.9"/>
<rect x="257.92" y="261.2" width="2.4" height="1.90" fill="#089981"/>
<line x1="262.90" y1="253.8" x2="262.90" y2="265.6" stroke="#f23645" stroke-width="0.9"/>
<rect x="261.70" y="261.7" width="2.4" height="3.90" fill="#f23645"/>
<line x1="266.69" y1="263.1" x2="266.69" y2="275.5" stroke="#f23645" stroke-width="0.9"/>
<rect x="265.49" y="264.6" width="2.4" height="10.90" fill="#f23645"/>
<line x1="270.48" y1="260.2" x2="270.48" y2="279.9" stroke="#089981" stroke-width="0.9"/>
<rect x="269.28" y="265.1" width="2.4" height="9.40" fill="#089981"/>
<line x1="274.26" y1="263.1" x2="274.26" y2="271.0" stroke="#f23645" stroke-width="0.9"/>
<rect x="273.06" y="264.6" width="2.4" height="5.90" fill="#f23645"/>
<line x1="278.05" y1="264.1" x2="278.05" y2="279.4" stroke="#f23645" stroke-width="0.9"/>
<rect x="276.85" y="270.0" width="2.4" height="8.40" fill="#f23645"/>
<line x1="281.84" y1="275.0" x2="281.84" y2="291.3" stroke="#f23645" stroke-width="0.9"/>
<rect x="280.64" y="277.4" width="2.4" height="3.50" fill="#f23645"/>
<line x1="285.62" y1="277.0" x2="285.62" y2="295.0" stroke="#f23645" stroke-width="0.9"/>
<rect x="284.42" y="279.9" width="2.4" height="7.40" fill="#f23645"/>
<line x1="289.41" y1="269.5" x2="289.41" y2="290.3" stroke="#089981" stroke-width="0.9"/>
<rect x="288.21" y="270.0" width="2.4" height="18.30" fill="#089981"/>
<line x1="293.20" y1="265.1" x2="293.20" y2="274.0" stroke="#089981" stroke-width="0.9"/>
<rect x="292.00" y="269.6" width="2.4" height="1.90" fill="#089981"/>
<line x1="296.99" y1="268.5" x2="296.99" y2="279.0" stroke="#f23645" stroke-width="0.9"/>
<rect x="295.79" y="269.0" width="2.4" height="9.40" fill="#f23645"/>
<line x1="300.77" y1="272.5" x2="300.77" y2="282.9" stroke="#f23645" stroke-width="0.9"/>
<rect x="299.57" y="277.4" width="2.4" height="5.00" fill="#f23645"/>
<line x1="304.56" y1="277.0" x2="304.56" y2="282.9" stroke="#089981" stroke-width="0.9"/>
<rect x="303.36" y="278.9" width="2.4" height="2.50" fill="#089981"/>
<line x1="308.35" y1="274.0" x2="308.35" y2="280.4" stroke="#089981" stroke-width="0.9"/>
<rect x="307.15" y="275.0" width="2.4" height="5.00" fill="#089981"/>
<line x1="312.13" y1="265.1" x2="312.13" y2="277.0" stroke="#089981" stroke-width="0.9"/>
<rect x="310.93" y="265.6" width="2.4" height="10.90" fill="#089981"/>
<line x1="315.92" y1="266.6" x2="315.92" y2="278.0" stroke="#f23645" stroke-width="0.9"/>
<rect x="314.72" y="267.1" width="2.4" height="8.40" fill="#f23645"/>
<line x1="319.71" y1="273.5" x2="319.71" y2="283.9" stroke="#f23645" stroke-width="0.9"/>
<rect x="318.51" y="274.0" width="2.4" height="9.40" fill="#f23645"/>
<line x1="323.49" y1="263.6" x2="323.49" y2="283.9" stroke="#089981" stroke-width="0.9"/>
<rect x="322.29" y="266.6" width="2.4" height="16.80" fill="#089981"/>
<line x1="327.28" y1="261.2" x2="327.28" y2="271.0" stroke="#f23645" stroke-width="0.9"/>
<rect x="326.08" y="266.6" width="2.4" height="1.40" fill="#f23645"/>
<line x1="331.07" y1="265.6" x2="331.07" y2="281.4" stroke="#f23645" stroke-width="0.9"/>
<rect x="329.87" y="266.6" width="2.4" height="13.80" fill="#f23645"/>
<line x1="334.86" y1="276.4" x2="334.86" y2="281.9" stroke="#f23645" stroke-width="0.9"/>
<rect x="333.66" y="277.4" width="2.4" height="4.00" fill="#f23645"/>
<line x1="338.64" y1="272.5" x2="338.64" y2="281.4" stroke="#089981" stroke-width="0.9"/>
<rect x="337.44" y="275.0" width="2.4" height="5.90" fill="#089981"/>
<line x1="342.43" y1="272.5" x2="342.43" y2="281.0" stroke="#f23645" stroke-width="0.9"/>
<rect x="341.23" y="275.0" width="2.4" height="5.50" fill="#f23645"/>
<line x1="346.22" y1="276.5" x2="346.22" y2="282.0" stroke="#089981" stroke-width="0.9"/>
<rect x="345.02" y="279.0" width="2.4" height="1.00" fill="#089981"/>
<line x1="350.00" y1="271.6" x2="350.00" y2="281.5" stroke="#089981" stroke-width="0.9"/>
<rect x="348.80" y="272.6" width="2.4" height="7.40" fill="#089981"/>
<line x1="353.79" y1="245.9" x2="353.79" y2="274.1" stroke="#089981" stroke-width="0.9"/>
<rect x="352.59" y="246.9" width="2.4" height="26.70" fill="#089981"/>
<line x1="357.58" y1="234.9" x2="357.58" y2="252.8" stroke="#f23645" stroke-width="0.9"/>
<rect x="356.38" y="246.9" width="2.4" height="5.40" fill="#f23645"/>
<line x1="361.36" y1="248.9" x2="361.36" y2="258.8" stroke="#f23645" stroke-width="0.9"/>
<rect x="360.16" y="251.4" width="2.4" height="1.90" fill="#f23645"/>
<line x1="365.15" y1="244.4" x2="365.15" y2="254.3" stroke="#089981" stroke-width="0.9"/>
<rect x="363.95" y="250.9" width="2.4" height="2.90" fill="#089981"/>
<line x1="368.94" y1="238.3" x2="368.94" y2="254.8" stroke="#089981" stroke-width="0.9"/>
<rect x="367.74" y="249.4" width="2.4" height="1.50" fill="#089981"/>
<line x1="372.72" y1="243.2" x2="372.72" y2="258.8" stroke="#089981" stroke-width="0.9"/>
<rect x="371.52" y="243.7" width="2.4" height="6.70" fill="#089981"/>
<line x1="376.51" y1="233.4" x2="376.51" y2="249.9" stroke="#089981" stroke-width="0.9"/>
<rect x="375.31" y="239.3" width="2.4" height="5.10" fill="#089981"/>
<line x1="380.30" y1="236.3" x2="380.30" y2="248.4" stroke="#089981" stroke-width="0.9"/>
<rect x="379.10" y="239.8" width="2.4" height="1.00" fill="#089981"/>
<line x1="384.09" y1="223.0" x2="384.09" y2="242.3" stroke="#089981" stroke-width="0.9"/>
<rect x="382.89" y="235.3" width="2.4" height="6.50" fill="#089981"/>
<line x1="387.87" y1="228.0" x2="387.87" y2="243.0" stroke="#089981" stroke-width="0.9"/>
<rect x="386.67" y="233.4" width="2.4" height="2.40" fill="#089981"/>
<line x1="391.66" y1="211.2" x2="391.66" y2="235.8" stroke="#089981" stroke-width="0.9"/>
<rect x="390.46" y="223.5" width="2.4" height="10.90" fill="#089981"/>
<line x1="395.45" y1="209.7" x2="395.45" y2="226.0" stroke="#089981" stroke-width="0.9"/>
<rect x="394.25" y="218.6" width="2.4" height="3.40" fill="#089981"/>
<line x1="399.23" y1="191.0" x2="399.23" y2="231.4" stroke="#089981" stroke-width="0.9"/>
<rect x="398.03" y="191.9" width="2.4" height="28.10" fill="#089981"/>
<line x1="403.02" y1="191.5" x2="403.02" y2="236.8" stroke="#f23645" stroke-width="0.9"/>
<rect x="401.82" y="191.9" width="2.4" height="38.00" fill="#f23645"/>
<line x1="406.81" y1="224.0" x2="406.81" y2="245.4" stroke="#f23645" stroke-width="0.9"/>
<rect x="405.61" y="229.4" width="2.4" height="6.90" fill="#f23645"/>
<line x1="410.59" y1="229.9" x2="410.59" y2="243.0" stroke="#089981" stroke-width="0.9"/>
<rect x="409.39" y="230.4" width="2.4" height="5.90" fill="#089981"/>
<line x1="414.38" y1="228.0" x2="414.38" y2="233.4" stroke="#f23645" stroke-width="0.9"/>
<rect x="413.18" y="230.4" width="2.4" height="2.50" fill="#f23645"/>
<line x1="418.17" y1="220.0" x2="418.17" y2="233.4" stroke="#089981" stroke-width="0.9"/>
<rect x="416.97" y="222.0" width="2.4" height="10.90" fill="#089981"/>
<line x1="421.96" y1="218.6" x2="421.96" y2="240.3" stroke="#f23645" stroke-width="0.9"/>
<rect x="420.76" y="222.5" width="2.4" height="17.30" fill="#f23645"/>
<line x1="425.74" y1="234.8" x2="425.74" y2="249.9" stroke="#f23645" stroke-width="0.9"/>
<rect x="424.54" y="235.8" width="2.4" height="13.60" fill="#f23645"/>
<line x1="429.53" y1="244.0" x2="429.53" y2="257.3" stroke="#f23645" stroke-width="0.9"/>
<rect x="428.33" y="244.4" width="2.4" height="4.00" fill="#f23645"/>
<line x1="433.32" y1="243.0" x2="433.32" y2="258.8" stroke="#f23645" stroke-width="0.9"/>
<rect x="432.12" y="247.4" width="2.4" height="10.90" fill="#f23645"/>
<line x1="437.10" y1="256.8" x2="437.10" y2="270.1" stroke="#f23645" stroke-width="0.9"/>
<rect x="435.90" y="257.4" width="2.4" height="6.90" fill="#f23645"/>
<line x1="440.89" y1="262.0" x2="440.89" y2="272.8" stroke="#f23645" stroke-width="0.9"/>
<rect x="439.69" y="263.4" width="2.4" height="6.90" fill="#f23645"/>
<line x1="444.68" y1="261.5" x2="444.68" y2="270.4" stroke="#089981" stroke-width="0.9"/>
<rect x="443.48" y="262.0" width="2.4" height="7.90" fill="#089981"/>
<line x1="448.46" y1="255.5" x2="448.46" y2="263.4" stroke="#089981" stroke-width="0.9"/>
<rect x="447.26" y="257.5" width="2.4" height="5.40" fill="#089981"/>
<line x1="452.25" y1="258.0" x2="452.25" y2="271.3" stroke="#f23645" stroke-width="0.9"/>
<rect x="451.05" y="258.5" width="2.4" height="9.90" fill="#f23645"/>
<line x1="456.04" y1="263.0" x2="456.04" y2="271.8" stroke="#089981" stroke-width="0.9"/>
<rect x="454.84" y="263.9" width="2.4" height="4.50" fill="#089981"/>
<line x1="459.83" y1="253.5" x2="459.83" y2="265.4" stroke="#089981" stroke-width="0.9"/>
<rect x="458.63" y="254.0" width="2.4" height="10.90" fill="#089981"/>
<line x1="463.61" y1="250.6" x2="463.61" y2="258.5" stroke="#089981" stroke-width="0.9"/>
<rect x="462.41" y="252.1" width="2.4" height="2.90" fill="#089981"/>
<line x1="467.40" y1="241.2" x2="467.40" y2="254.0" stroke="#089981" stroke-width="0.9"/>
<rect x="466.20" y="244.7" width="2.4" height="8.90" fill="#089981"/>
<line x1="471.19" y1="240.7" x2="471.19" y2="253.6" stroke="#089981" stroke-width="0.9"/>
<rect x="469.99" y="244.0" width="2.4" height="8.00" fill="#089981"/>
<line x1="474.97" y1="240.2" x2="474.97" y2="262.0" stroke="#f23645" stroke-width="0.9"/>
<rect x="473.77" y="244.7" width="2.4" height="16.30" fill="#f23645"/>
<line x1="478.76" y1="245.7" x2="478.76" y2="263.9" stroke="#089981" stroke-width="0.9"/>
<rect x="477.56" y="248.1" width="2.4" height="12.40" fill="#089981"/>
<line x1="482.55" y1="234.8" x2="482.55" y2="251.6" stroke="#089981" stroke-width="0.9"/>
<rect x="481.35" y="238.8" width="2.4" height="10.30" fill="#089981"/>
<line x1="486.33" y1="235.3" x2="486.33" y2="262.0" stroke="#f23645" stroke-width="0.9"/>
<rect x="485.13" y="237.8" width="2.4" height="21.20" fill="#f23645"/>
<line x1="490.12" y1="254.0" x2="490.12" y2="265.9" stroke="#f23645" stroke-width="0.9"/>
<rect x="488.92" y="258.5" width="2.4" height="2.50" fill="#f23645"/>
<line x1="493.91" y1="256.0" x2="493.91" y2="262.9" stroke="#089981" stroke-width="0.9"/>
<rect x="492.71" y="257.5" width="2.4" height="4.00" fill="#089981"/>
<line x1="497.70" y1="252.0" x2="497.70" y2="259.5" stroke="#f23645" stroke-width="0.9"/>
<rect x="496.50" y="254.0" width="2.4" height="4.50" fill="#f23645"/>
<line x1="501.48" y1="257.5" x2="501.48" y2="267.9" stroke="#f23645" stroke-width="0.9"/>
<rect x="500.28" y="258.0" width="2.4" height="8.40" fill="#f23645"/>
<line x1="505.27" y1="263.9" x2="505.27" y2="275.8" stroke="#f23645" stroke-width="0.9"/>
<rect x="504.07" y="265.4" width="2.4" height="9.40" fill="#f23645"/>
<line x1="509.06" y1="263.9" x2="509.06" y2="275.8" stroke="#089981" stroke-width="0.9"/>
<rect x="507.86" y="264.4" width="2.4" height="10.90" fill="#089981"/>
<line x1="512.84" y1="263.9" x2="512.84" y2="270.8" stroke="#f23645" stroke-width="0.9"/>
<rect x="511.64" y="264.4" width="2.4" height="5.90" fill="#f23645"/>
<line x1="516.63" y1="253.1" x2="516.63" y2="274.3" stroke="#089981" stroke-width="0.9"/>
<rect x="515.43" y="253.6" width="2.4" height="16.30" fill="#089981"/>
<line x1="520.42" y1="253.5" x2="520.42" y2="260.5" stroke="#f23645" stroke-width="0.9"/>
<rect x="519.22" y="254.0" width="2.4" height="3.50" fill="#f23645"/>
<line x1="524.21" y1="253.5" x2="524.21" y2="265.9" stroke="#f23645" stroke-width="0.9"/>
<rect x="523.00" y="255.5" width="2.4" height="7.90" fill="#f23645"/>
<line x1="527.99" y1="260.2" x2="527.99" y2="280.9" stroke="#f23645" stroke-width="0.9"/>
<rect x="526.79" y="262.5" width="2.4" height="16.50" fill="#f23645"/>
<line x1="531.78" y1="265.0" x2="531.78" y2="278.0" stroke="#089981" stroke-width="0.9"/>
<rect x="530.58" y="265.5" width="2.4" height="12.00" fill="#089981"/>
<line x1="535.57" y1="263.0" x2="535.57" y2="270.1" stroke="#f23645" stroke-width="0.9"/>
<rect x="534.37" y="265.6" width="2.4" height="4.00" fill="#f23645"/>
<line x1="539.35" y1="263.6" x2="539.35" y2="271.0" stroke="#089981" stroke-width="0.9"/>
<rect x="538.15" y="264.1" width="2.4" height="5.90" fill="#089981"/>
<line x1="543.14" y1="263.6" x2="543.14" y2="276.0" stroke="#f23645" stroke-width="0.9"/>
<rect x="541.94" y="264.1" width="2.4" height="11.40" fill="#f23645"/>
<line x1="546.93" y1="271.0" x2="546.93" y2="276.5" stroke="#089981" stroke-width="0.9"/>
<rect x="545.73" y="273.5" width="2.4" height="1.50" fill="#089981"/>
<line x1="550.71" y1="272.0" x2="550.71" y2="278.4" stroke="#f23645" stroke-width="0.9"/>
<rect x="549.51" y="273.0" width="2.4" height="4.90" fill="#f23645"/>
<line x1="554.50" y1="273.5" x2="554.50" y2="285.8" stroke="#f23645" stroke-width="0.9"/>
<rect x="553.30" y="276.5" width="2.4" height="7.90" fill="#f23645"/>
<line x1="558.29" y1="276.0" x2="558.29" y2="283.9" stroke="#089981" stroke-width="0.9"/>
<rect x="557.09" y="276.5" width="2.4" height="6.90" fill="#089981"/>
<line x1="562.08" y1="273.0" x2="562.08" y2="278.4" stroke="#089981" stroke-width="0.9"/>
<rect x="560.88" y="275.0" width="2.4" height="2.40" fill="#089981"/>
<line x1="565.86" y1="274.0" x2="565.86" y2="281.4" stroke="#f23645" stroke-width="0.9"/>
<rect x="564.66" y="274.5" width="2.4" height="6.40" fill="#f23645"/>
<line x1="569.65" y1="270.5" x2="569.65" y2="281.4" stroke="#089981" stroke-width="0.9"/>
<rect x="568.45" y="271.0" width="2.4" height="9.90" fill="#089981"/>
<line x1="573.44" y1="263.1" x2="573.44" y2="274.5" stroke="#089981" stroke-width="0.9"/>
<rect x="572.24" y="264.1" width="2.4" height="8.40" fill="#089981"/>
<line x1="577.22" y1="245.4" x2="577.22" y2="265.6" stroke="#089981" stroke-width="0.9"/>
<rect x="576.02" y="252.8" width="2.4" height="12.30" fill="#089981"/>
<line x1="581.01" y1="160.4" x2="581.01" y2="253.8" stroke="#089981" stroke-width="0.9"/>
<rect x="579.81" y="162.3" width="2.4" height="91.00" fill="#089981"/>
<line x1="584.80" y1="56.9" x2="584.80" y2="165.5" stroke="#089981" stroke-width="0.9"/>
<rect x="583.60" y="104.0" width="2.4" height="60.80" fill="#089981"/>
<line x1="588.58" y1="79.1" x2="588.58" y2="132.1" stroke="#f23645" stroke-width="0.9"/>
<rect x="587.38" y="104.4" width="2.4" height="10.90" fill="#f23645"/>
<line x1="592.37" y1="111.8" x2="592.37" y2="160.9" stroke="#f23645" stroke-width="0.9"/>
<rect x="591.17" y="114.8" width="2.4" height="35.40" fill="#f23645"/>
<line x1="596.16" y1="132.1" x2="596.16" y2="170.7" stroke="#089981" stroke-width="0.9"/>
<rect x="594.96" y="147.8" width="2.4" height="2.40" fill="#089981"/>
<line x1="599.95" y1="136.9" x2="599.95" y2="160.7" stroke="#f23645" stroke-width="0.9"/>
<rect x="598.75" y="147.9" width="2.4" height="2.00" fill="#f23645"/>
<line x1="603.73" y1="134.8" x2="603.73" y2="164.2" stroke="#f23645" stroke-width="0.9"/>
<rect x="602.53" y="148.9" width="2.4" height="14.30" fill="#f23645"/>
<line x1="607.52" y1="156.3" x2="607.52" y2="181.6" stroke="#f23645" stroke-width="0.9"/>
<rect x="606.32" y="163.0" width="2.4" height="10.70" fill="#f23645"/>
<line x1="611.31" y1="156.9" x2="611.31" y2="177.1" stroke="#089981" stroke-width="0.9"/>
<rect x="610.11" y="173.2" width="2.4" height="1.00" fill="#089981"/>
<line x1="615.09" y1="156.3" x2="615.09" y2="179.6" stroke="#089981" stroke-width="0.9"/>
<rect x="613.89" y="158.4" width="2.4" height="15.30" fill="#089981"/>
<line x1="618.88" y1="142.0" x2="618.88" y2="165.7" stroke="#089981" stroke-width="0.9"/>
<rect x="617.68" y="157.8" width="2.4" height="1.90" fill="#089981"/>
<line x1="622.67" y1="155.8" x2="622.67" y2="176.7" stroke="#f23645" stroke-width="0.9"/>
<rect x="621.47" y="158.3" width="2.4" height="17.40" fill="#f23645"/>
<line x1="626.45" y1="169.2" x2="626.45" y2="179.1" stroke="#f23645" stroke-width="0.9"/>
<rect x="625.25" y="173.7" width="2.4" height="1.50" fill="#f23645"/>
<line x1="630.24" y1="170.2" x2="630.24" y2="189.0" stroke="#f23645" stroke-width="0.9"/>
<rect x="629.04" y="174.7" width="2.4" height="7.40" fill="#f23645"/>
<line x1="634.03" y1="179.6" x2="634.03" y2="211.7" stroke="#f23645" stroke-width="0.9"/>
<rect x="632.83" y="180.6" width="2.4" height="12.90" fill="#f23645"/>
<line x1="637.82" y1="191.5" x2="637.82" y2="210.7" stroke="#f23645" stroke-width="0.9"/>
<rect x="636.62" y="192.5" width="2.4" height="16.30" fill="#f23645"/>
<line x1="641.60" y1="198.4" x2="641.60" y2="216.2" stroke="#089981" stroke-width="0.9"/>
<rect x="640.40" y="198.9" width="2.4" height="8.90" fill="#089981"/>
<line x1="645.39" y1="198.9" x2="645.39" y2="220.6" stroke="#f23645" stroke-width="0.9"/>
<rect x="644.19" y="199.4" width="2.4" height="15.80" fill="#f23645"/>
<line x1="649.18" y1="209.7" x2="649.18" y2="222.1" stroke="#089981" stroke-width="0.9"/>
<rect x="647.98" y="210.7" width="2.4" height="4.00" fill="#089981"/>
<line x1="652.96" y1="193.5" x2="652.96" y2="214.2" stroke="#f23645" stroke-width="0.9"/>
<rect x="651.76" y="211.2" width="2.4" height="2.50" fill="#f23645"/>
<line x1="656.75" y1="199.9" x2="656.75" y2="219.1" stroke="#089981" stroke-width="0.9"/>
<rect x="655.55" y="201.8" width="2.4" height="11.40" fill="#089981"/>
<line x1="660.54" y1="201.8" x2="660.54" y2="216.7" stroke="#f23645" stroke-width="0.9"/>
<rect x="659.34" y="202.3" width="2.4" height="10.40" fill="#f23645"/>
<line x1="664.32" y1="210.2" x2="664.32" y2="225.5" stroke="#f23645" stroke-width="0.9"/>
<rect x="663.12" y="211.2" width="2.4" height="7.40" fill="#f23645"/>
<line x1="668.11" y1="202.3" x2="668.11" y2="219.6" stroke="#089981" stroke-width="0.9"/>
<rect x="666.91" y="204.8" width="2.4" height="14.30" fill="#089981"/>
<line x1="671.90" y1="196.9" x2="671.90" y2="209.2" stroke="#089981" stroke-width="0.9"/>
<rect x="670.70" y="199.4" width="2.4" height="7.90" fill="#089981"/>
<line x1="675.69" y1="191.5" x2="675.69" y2="206.3" stroke="#f23645" stroke-width="0.9"/>
<rect x="674.49" y="199.9" width="2.4" height="2.40" fill="#f23645"/>
<line x1="679.47" y1="201.4" x2="679.47" y2="216.7" stroke="#f23645" stroke-width="0.9"/>
<rect x="678.27" y="201.8" width="2.4" height="12.40" fill="#f23645"/>
<line x1="683.26" y1="204.3" x2="683.26" y2="217.1" stroke="#f23645" stroke-width="0.9"/>
<rect x="682.06" y="212.7" width="2.4" height="4.00" fill="#f23645"/>
<line x1="687.05" y1="204.3" x2="687.05" y2="217.6" stroke="#089981" stroke-width="0.9"/>
<rect x="685.85" y="206.3" width="2.4" height="10.80" fill="#089981"/>
<line x1="690.83" y1="203.3" x2="690.83" y2="227.5" stroke="#f23645" stroke-width="0.9"/>
<rect x="689.63" y="206.8" width="2.4" height="20.20" fill="#f23645"/>
<line x1="694.62" y1="210.2" x2="694.62" y2="230.5" stroke="#089981" stroke-width="0.9"/>
<rect x="693.42" y="211.2" width="2.4" height="15.30" fill="#089981"/>
<line x1="698.41" y1="211.2" x2="698.41" y2="229.0" stroke="#f23645" stroke-width="0.9"/>
<rect x="697.21" y="211.7" width="2.4" height="14.30" fill="#f23645"/>
<line x1="702.19" y1="206.8" x2="702.19" y2="379.3" stroke="#f23645" stroke-width="0.9"/>
<rect x="700.99" y="225.5" width="2.4" height="54.50" fill="#f23645"/>
<line x1="705.98" y1="252.8" x2="705.98" y2="281.5" stroke="#089981" stroke-width="0.9"/>
<rect x="704.78" y="271.6" width="2.4" height="9.40" fill="#089981"/>
<line x1="709.77" y1="249.4" x2="709.77" y2="275.5" stroke="#089981" stroke-width="0.9"/>
<rect x="708.57" y="258.3" width="2.4" height="14.80" fill="#089981"/>
<line x1="713.56" y1="254.3" x2="713.56" y2="264.2" stroke="#089981" stroke-width="0.9"/>
<rect x="712.36" y="256.8" width="2.4" height="2.00" fill="#089981"/>
<line x1="717.34" y1="254.8" x2="717.34" y2="274.5" stroke="#f23645" stroke-width="0.9"/>
<rect x="716.14" y="255.8" width="2.4" height="10.40" fill="#f23645"/>
<line x1="721.13" y1="261.2" x2="721.13" y2="272.6" stroke="#f23645" stroke-width="0.9"/>
<rect x="719.93" y="264.7" width="2.4" height="5.40" fill="#f23645"/>
<line x1="724.92" y1="264.2" x2="724.92" y2="277.0" stroke="#f23645" stroke-width="0.9"/>
<rect x="723.72" y="268.6" width="2.4" height="7.90" fill="#f23645"/>
<line x1="728.70" y1="273.1" x2="728.70" y2="287.9" stroke="#f23645" stroke-width="0.9"/>
<rect x="727.50" y="274.5" width="2.4" height="5.50" fill="#f23645"/>
<line x1="732.49" y1="274.6" x2="732.49" y2="280.0" stroke="#089981" stroke-width="0.9"/>
<rect x="731.29" y="276.0" width="2.4" height="3.50" fill="#089981"/>
<line x1="736.28" y1="269.1" x2="736.28" y2="279.5" stroke="#089981" stroke-width="0.9"/>
<rect x="735.08" y="271.6" width="2.4" height="6.90" fill="#089981"/>
<line x1="740.06" y1="267.1" x2="740.06" y2="275.0" stroke="#089981" stroke-width="0.9"/>
<rect x="738.86" y="271.6" width="2.4" height="1.50" fill="#089981"/>
<line x1="743.85" y1="263.7" x2="743.85" y2="278.5" stroke="#f23645" stroke-width="0.9"/>
<rect x="742.65" y="271.6" width="2.4" height="6.40" fill="#f23645"/>
<line x1="747.64" y1="275.0" x2="747.64" y2="289.4" stroke="#f23645" stroke-width="0.9"/>
<rect x="746.44" y="276.5" width="2.4" height="8.40" fill="#f23645"/>
<line x1="751.43" y1="279.0" x2="751.43" y2="284.9" stroke="#089981" stroke-width="0.9"/>
<rect x="750.23" y="280.0" width="2.4" height="4.40" fill="#089981"/>
<line x1="755.21" y1="272.6" x2="755.21" y2="282.4" stroke="#089981" stroke-width="0.9"/>
<rect x="754.01" y="274.5" width="2.4" height="7.50" fill="#089981"/>
<line x1="759.00" y1="274.5" x2="759.00" y2="279.0" stroke="#f23645" stroke-width="0.9"/>
<rect x="757.80" y="275.0" width="2.4" height="2.00" fill="#f23645"/>
<line x1="762.79" y1="263.7" x2="762.79" y2="278.5" stroke="#089981" stroke-width="0.9"/>
<rect x="761.59" y="265.7" width="2.4" height="11.80" fill="#089981"/>
<line x1="766.57" y1="265.2" x2="766.57" y2="275.0" stroke="#f23645" stroke-width="0.9"/>
<rect x="765.37" y="266.2" width="2.4" height="8.30" fill="#f23645"/>
<line x1="770.36" y1="270.6" x2="770.36" y2="283.0" stroke="#f23645" stroke-width="0.9"/>
<rect x="769.16" y="273.6" width="2.4" height="7.90" fill="#f23645"/>
<line x1="774.15" y1="274.6" x2="774.15" y2="285.0" stroke="#f23645" stroke-width="0.9"/>
<rect x="772.95" y="280.0" width="2.4" height="2.00" fill="#f23645"/>
<line x1="777.93" y1="279.5" x2="777.93" y2="296.8" stroke="#f23645" stroke-width="0.9"/>
<rect x="776.73" y="280.5" width="2.4" height="10.80" fill="#f23645"/>
<line x1="781.72" y1="288.2" x2="781.72" y2="294.1" stroke="#089981" stroke-width="0.9"/>
<rect x="780.52" y="291.2" width="2.4" height="1.90" fill="#089981"/>
<line x1="785.51" y1="274.9" x2="785.51" y2="292.6" stroke="#089981" stroke-width="0.9"/>
<rect x="784.31" y="278.8" width="2.4" height="13.30" fill="#089981"/>
<line x1="789.30" y1="278.8" x2="789.30" y2="288.2" stroke="#f23645" stroke-width="0.9"/>
<rect x="788.10" y="279.3" width="2.4" height="5.90" fill="#f23645"/>
<line x1="793.08" y1="283.8" x2="793.08" y2="308.0" stroke="#f23645" stroke-width="0.9"/>
<rect x="791.88" y="284.2" width="2.4" height="20.80" fill="#f23645"/>
<line x1="796.87" y1="302.5" x2="796.87" y2="315.8" stroke="#f23645" stroke-width="0.9"/>
<rect x="795.67" y="303.0" width="2.4" height="7.40" fill="#f23645"/>
<line x1="800.66" y1="300.0" x2="800.66" y2="312.9" stroke="#089981" stroke-width="0.9"/>
<rect x="799.46" y="301.0" width="2.4" height="7.40" fill="#089981"/>
<line x1="804.44" y1="301.0" x2="804.44" y2="309.9" stroke="#f23645" stroke-width="0.9"/>
<rect x="803.24" y="301.5" width="2.4" height="6.90" fill="#f23645"/>
<line x1="808.23" y1="279.3" x2="808.23" y2="308.4" stroke="#089981" stroke-width="0.9"/>
<rect x="807.03" y="284.7" width="2.4" height="23.30" fill="#089981"/>
<line x1="812.02" y1="282.8" x2="812.02" y2="292.1" stroke="#f23645" stroke-width="0.9"/>
<rect x="810.82" y="284.7" width="2.4" height="5.50" fill="#f23645"/>
<line x1="815.80" y1="287.2" x2="815.80" y2="294.6" stroke="#089981" stroke-width="0.9"/>
<rect x="814.60" y="288.2" width="2.4" height="1.50" fill="#089981"/>
<line x1="819.59" y1="283.2" x2="819.59" y2="289.7" stroke="#089981" stroke-width="0.9"/>
<rect x="818.39" y="284.2" width="2.4" height="4.50" fill="#089981"/>
<line x1="823.38" y1="283.2" x2="823.38" y2="297.1" stroke="#f23645" stroke-width="0.9"/>
<rect x="822.18" y="285.2" width="2.4" height="11.40" fill="#f23645"/>
<line x1="827.17" y1="288.7" x2="827.17" y2="300.0" stroke="#f23645" stroke-width="0.9"/>
<rect x="825.97" y="296.1" width="2.4" height="2.00" fill="#f23645"/>
<line x1="830.95" y1="290.2" x2="830.95" y2="305.0" stroke="#f23645" stroke-width="0.9"/>
<rect x="829.75" y="297.6" width="2.4" height="5.90" fill="#f23645"/>
<line x1="834.74" y1="299.1" x2="834.74" y2="309.9" stroke="#f23645" stroke-width="0.9"/>
<rect x="833.54" y="299.6" width="2.4" height="9.30" fill="#f23645"/>
<line x1="838.53" y1="303.0" x2="838.53" y2="309.9" stroke="#f23645" stroke-width="0.9"/>
<rect x="837.33" y="306.0" width="2.4" height="2.90" fill="#f23645"/>
<line x1="842.31" y1="306.9" x2="842.31" y2="314.9" stroke="#f23645" stroke-width="0.9"/>
<rect x="841.11" y="307.4" width="2.4" height="6.50" fill="#f23645"/>
<line x1="846.10" y1="308.4" x2="846.10" y2="318.3" stroke="#f23645" stroke-width="0.9"/>
<rect x="844.90" y="312.4" width="2.4" height="4.40" fill="#f23645"/>
<line x1="849.89" y1="308.4" x2="849.89" y2="317.3" stroke="#089981" stroke-width="0.9"/>
<rect x="848.69" y="309.4" width="2.4" height="6.40" fill="#089981"/>
<line x1="853.67" y1="309.2" x2="853.67" y2="319.1" stroke="#f23645" stroke-width="0.9"/>
<rect x="852.47" y="309.7" width="2.4" height="4.50" fill="#f23645"/>
<line x1="857.46" y1="305.3" x2="857.46" y2="318.6" stroke="#f23645" stroke-width="0.9"/>
<rect x="856.26" y="313.2" width="2.4" height="3.00" fill="#f23645"/>
<line x1="861.25" y1="313.2" x2="861.25" y2="330.0" stroke="#f23645" stroke-width="0.9"/>
<rect x="860.05" y="314.7" width="2.4" height="12.30" fill="#f23645"/>
<line x1="865.04" y1="322.6" x2="865.04" y2="326.5" stroke="#089981" stroke-width="0.9"/>
<rect x="863.84" y="323.6" width="2.4" height="1.90" fill="#089981"/>
<line x1="868.82" y1="320.1" x2="868.82" y2="324.6" stroke="#089981" stroke-width="0.9"/>
<rect x="867.62" y="321.6" width="2.4" height="2.00" fill="#089981"/>
<line x1="872.61" y1="317.1" x2="872.61" y2="325.1" stroke="#089981" stroke-width="0.9"/>
<rect x="871.41" y="318.1" width="2.4" height="6.00" fill="#089981"/>
<line x1="876.40" y1="316.6" x2="876.40" y2="321.6" stroke="#089981" stroke-width="0.9"/>
<rect x="875.20" y="317.6" width="2.4" height="2.00" fill="#089981"/>
<line x1="880.18" y1="314.2" x2="880.18" y2="321.6" stroke="#089981" stroke-width="0.9"/>
<rect x="878.98" y="315.2" width="2.4" height="5.90" fill="#089981"/>
<line x1="883.97" y1="313.2" x2="883.97" y2="317.2" stroke="#f23645" stroke-width="0.9"/>
<rect x="882.77" y="314.2" width="2.4" height="2.50" fill="#f23645"/>
<line x1="887.76" y1="312.7" x2="887.76" y2="317.6" stroke="#f23645" stroke-width="0.9"/>
<rect x="886.56" y="313.7" width="2.4" height="3.40" fill="#f23645"/>
<line x1="891.54" y1="314.2" x2="891.54" y2="320.1" stroke="#f23645" stroke-width="0.9"/>
<rect x="890.34" y="315.2" width="2.4" height="4.40" fill="#f23645"/>
<line x1="895.33" y1="317.1" x2="895.33" y2="322.1" stroke="#f23645" stroke-width="0.9"/>
<rect x="894.13" y="318.1" width="2.4" height="3.50" fill="#f23645"/>
<line x1="899.12" y1="320.1" x2="899.12" y2="332.0" stroke="#f23645" stroke-width="0.9"/>
<rect x="897.92" y="320.6" width="2.4" height="9.90" fill="#f23645"/>
<line x1="902.90" y1="313.7" x2="902.90" y2="330.0" stroke="#089981" stroke-width="0.9"/>
<rect x="901.70" y="316.2" width="2.4" height="13.30" fill="#089981"/>
<line x1="906.69" y1="317.1" x2="906.69" y2="321.6" stroke="#089981" stroke-width="0.9"/>
<rect x="905.49" y="317.6" width="2.4" height="2.50" fill="#089981"/>
<line x1="910.48" y1="317.1" x2="910.48" y2="322.1" stroke="#f23645" stroke-width="0.9"/>
<rect x="909.28" y="318.1" width="2.4" height="3.50" fill="#f23645"/>
<line x1="914.27" y1="320.1" x2="914.27" y2="331.0" stroke="#f23645" stroke-width="0.9"/>
<rect x="913.07" y="320.6" width="2.4" height="9.90" fill="#f23645"/>
<line x1="918.05" y1="326.0" x2="918.05" y2="329.5" stroke="#089981" stroke-width="0.9"/>
<rect x="916.85" y="327.0" width="2.4" height="2.00" fill="#089981"/>
<line x1="921.84" y1="325.0" x2="921.84" y2="331.0" stroke="#f23645" stroke-width="0.9"/>
<rect x="920.64" y="327.5" width="2.4" height="3.00" fill="#f23645"/>
<line x1="925.63" y1="320.6" x2="925.63" y2="331.0" stroke="#089981" stroke-width="0.9"/>
<rect x="924.43" y="321.1" width="2.4" height="9.40" fill="#089981"/>
<line x1="929.41" y1="316.2" x2="929.41" y2="326.0" stroke="#089981" stroke-width="0.9"/>
<rect x="928.21" y="316.6" width="2.4" height="6.30" fill="#089981"/>
<line x1="933.20" y1="317.6" x2="933.20" y2="321.1" stroke="#f23645" stroke-width="0.9"/>
<rect x="932.00" y="317.8" width="2.4" height="3.00" fill="#f23645"/>
<rect x="7" y="455.7" width="966" height="81.6" fill="#7e57c2" fill-opacity="0.12"/>
<line x1="7" y1="455.5" x2="973" y2="455.5" stroke="#6f727c" stroke-width="1" stroke-dasharray="4 3.4"/>
<line x1="7" y1="496.5" x2="973" y2="496.5" stroke="#6f727c" stroke-width="1" stroke-dasharray="4 3.4"/>
<line x1="7" y1="537.5" x2="973" y2="537.5" stroke="#6f727c" stroke-width="1" stroke-dasharray="4 3.4"/>
<clipPath id="ob"><rect x="7" y="412" width="966" height="43.7"/></clipPath>
<polygon clip-path="url(#ob)" points="9.2,517.8 13.0,504.9 16.7,497.2 20.5,506.5 24.3,504.8 28.1,511.0 31.9,514.3 35.7,510.2 39.5,508.7 43.3,494.7 47.0,492.7 50.8,496.7 54.6,481.6 58.4,477.0 62.2,467.6 66.0,452.7 69.8,439.6 73.6,458.1 77.3,457.2 81.1,466.4 84.9,461.8 88.7,477.1 92.5,479.6 96.3,492.0 100.1,496.9 103.8,505.1 107.6,494.4 111.4,494.8 115.2,477.1 119.0,469.2 122.8,459.2 126.6,458.5 130.4,456.8 134.1,455.4 137.9,468.1 141.7,483.9 145.5,490.0 149.3,494.2 153.1,480.4 156.9,488.5 160.7,491.3 164.4,479.9 168.2,453.8 172.0,475.1 175.8,470.4 179.6,468.9 183.4,476.9 187.2,474.0 190.9,485.6 194.7,485.7 198.5,504.8 202.3,503.2 206.1,499.7 209.9,497.6 213.7,498.6 217.5,505.0 221.2,515.1 225.0,510.2 228.8,502.4 232.6,504.3 236.4,496.1 240.2,494.9 244.0,502.5 247.8,514.3 251.5,516.4 255.3,519.9 259.1,518.2 262.9,521.5 266.7,528.3 270.5,516.9 274.3,520.9 278.1,526.3 281.8,528.0 285.6,532.1 289.4,512.1 293.2,511.5 297.0,518.4 300.8,521.2 304.6,516.8 308.3,511.8 312.1,500.9 315.9,510.2 319.7,516.9 323.5,499.0 327.3,500.3 331.1,511.2 334.9,512.0 338.6,504.6 342.4,509.4 346.2,507.3 350.0,499.3 353.8,475.2 357.6,480.8 361.4,481.6 365.2,479.2 368.9,477.6 372.7,472.2 376.5,468.2 380.3,468.9 384.1,464.6 387.9,462.8 391.7,454.4 395.4,450.8 399.2,435.8 403.0,481.6 406.8,487.5 410.6,483.4 414.4,486.1 418.2,478.2 422.0,494.6 425.7,502.5 429.5,502.0 433.3,510.0 437.1,514.6 440.9,519.1 444.7,510.5 448.5,506.0 452.3,514.5 456.0,509.7 459.8,499.7 463.6,497.8 467.4,490.7 471.2,489.9 475.0,506.5 478.8,494.0 482.5,486.2 486.3,503.8 490.1,505.4 493.9,502.2 497.7,503.2 501.5,510.2 505.3,517.1 509.1,505.9 512.8,510.8 516.6,494.6 520.4,498.1 524.2,503.4 528.0,515.9 531.8,502.8 535.6,506.2 539.4,501.1 543.1,510.5 546.9,508.6 550.7,512.3 554.5,517.5 558.3,508.5 562.1,506.6 565.9,511.6 569.6,499.9 573.4,492.2 577.2,481.3 581.0,438.9 584.8,427.3 588.6,435.7 592.4,458.5 596.2,458.1 599.9,459.6 603.7,468.3 607.5,474.8 611.3,474.7 615.1,468.7 618.9,468.5 622.7,480.8 626.5,480.7 630.2,485.6 634.0,493.4 637.8,502.8 641.6,496.6 645.4,506.2 649.2,503.2 653.0,505.1 656.8,496.7 660.5,503.8 664.3,507.5 668.1,497.5 671.9,493.9 675.7,496.1 679.5,504.7 683.3,506.5 687.0,498.1 690.8,512.4 694.6,500.3 698.4,509.7 702.2,533.9 706.0,527.9 709.8,518.7 713.6,517.7 717.3,522.1 721.1,524.0 724.9,527.1 728.7,528.9 732.5,525.3 736.3,521.3 740.1,521.3 743.9,525.1 747.6,529.0 751.4,523.5 755.2,517.5 759.0,519.3 762.8,507.2 766.6,514.3 770.4,519.7 774.1,520.2 777.9,527.1 781.7,527.1 785.5,511.9 789.3,517.3 793.1,531.3 796.9,534.7 800.7,523.6 804.4,528.6 808.2,504.7 812.0,509.0 815.8,507.1 819.6,503.4 823.4,513.6 827.2,514.9 831.0,519.3 834.7,523.6 838.5,523.9 842.3,528.1 846.1,530.7 849.9,520.6 853.7,525.1 857.5,527.0 861.2,536.0 865.0,530.7 868.8,527.5 872.6,521.8 876.4,520.8 880.2,516.7 884.0,518.4 887.8,518.9 891.5,522.3 895.3,525.1 899.1,535.8 902.9,509.8 906.7,511.7 910.5,516.8 914.3,527.1 918.1,520.6 921.8,524.4 925.6,508.1 929.4,501.0 933.2,506.5 933.2,455.7 9.2,455.7" fill="#089981" fill-opacity="0.35"/>
<polyline points="9.2,517.8 13.0,504.9 16.7,497.2 20.5,506.5 24.3,504.8 28.1,511.0 31.9,514.3 35.7,510.2 39.5,508.7 43.3,494.7 47.0,492.7 50.8,496.7 54.6,481.6 58.4,477.0 62.2,467.6 66.0,452.7 69.8,439.6 73.6,458.1 77.3,457.2 81.1,466.4 84.9,461.8 88.7,477.1 92.5,479.6 96.3,492.0 100.1,496.9 103.8,505.1 107.6,494.4 111.4,494.8 115.2,477.1 119.0,469.2 122.8,459.2 126.6,458.5 130.4,456.8 134.1,455.4 137.9,468.1 141.7,483.9 145.5,490.0 149.3,494.2 153.1,480.4 156.9,488.5 160.7,491.3 164.4,479.9 168.2,453.8 172.0,475.1 175.8,470.4 179.6,468.9 183.4,476.9 187.2,474.0 190.9,485.6 194.7,485.7 198.5,504.8 202.3,503.2 206.1,499.7 209.9,497.6 213.7,498.6 217.5,505.0 221.2,515.1 225.0,510.2 228.8,502.4 232.6,504.3 236.4,496.1 240.2,494.9 244.0,502.5 247.8,514.3 251.5,516.4 255.3,519.9 259.1,518.2 262.9,521.5 266.7,528.3 270.5,516.9 274.3,520.9 278.1,526.3 281.8,528.0 285.6,532.1 289.4,512.1 293.2,511.5 297.0,518.4 300.8,521.2 304.6,516.8 308.3,511.8 312.1,500.9 315.9,510.2 319.7,516.9 323.5,499.0 327.3,500.3 331.1,511.2 334.9,512.0 338.6,504.6 342.4,509.4 346.2,507.3 350.0,499.3 353.8,475.2 357.6,480.8 361.4,481.6 365.2,479.2 368.9,477.6 372.7,472.2 376.5,468.2 380.3,468.9 384.1,464.6 387.9,462.8 391.7,454.4 395.4,450.8 399.2,435.8 403.0,481.6 406.8,487.5 410.6,483.4 414.4,486.1 418.2,478.2 422.0,494.6 425.7,502.5 429.5,502.0 433.3,510.0 437.1,514.6 440.9,519.1 444.7,510.5 448.5,506.0 452.3,514.5 456.0,509.7 459.8,499.7 463.6,497.8 467.4,490.7 471.2,489.9 475.0,506.5 478.8,494.0 482.5,486.2 486.3,503.8 490.1,505.4 493.9,502.2 497.7,503.2 501.5,510.2 505.3,517.1 509.1,505.9 512.8,510.8 516.6,494.6 520.4,498.1 524.2,503.4 528.0,515.9 531.8,502.8 535.6,506.2 539.4,501.1 543.1,510.5 546.9,508.6 550.7,512.3 554.5,517.5 558.3,508.5 562.1,506.6 565.9,511.6 569.6,499.9 573.4,492.2 577.2,481.3 581.0,438.9 584.8,427.3 588.6,435.7 592.4,458.5 596.2,458.1 599.9,459.6 603.7,468.3 607.5,474.8 611.3,474.7 615.1,468.7 618.9,468.5 622.7,480.8 626.5,480.7 630.2,485.6 634.0,493.4 637.8,502.8 641.6,496.6 645.4,506.2 649.2,503.2 653.0,505.1 656.8,496.7 660.5,503.8 664.3,507.5 668.1,497.5 671.9,493.9 675.7,496.1 679.5,504.7 683.3,506.5 687.0,498.1 690.8,512.4 694.6,500.3 698.4,509.7 702.2,533.9 706.0,527.9 709.8,518.7 713.6,517.7 717.3,522.1 721.1,524.0 724.9,527.1 728.7,528.9 732.5,525.3 736.3,521.3 740.1,521.3 743.9,525.1 747.6,529.0 751.4,523.5 755.2,517.5 759.0,519.3 762.8,507.2 766.6,514.3 770.4,519.7 774.1,520.2 777.9,527.1 781.7,527.1 785.5,511.9 789.3,517.3 793.1,531.3 796.9,534.7 800.7,523.6 804.4,528.6 808.2,504.7 812.0,509.0 815.8,507.1 819.6,503.4 823.4,513.6 827.2,514.9 831.0,519.3 834.7,523.6 838.5,523.9 842.3,528.1 846.1,530.7 849.9,520.6 853.7,525.1 857.5,527.0 861.2,536.0 865.0,530.7 868.8,527.5 872.6,521.8 876.4,520.8 880.2,516.7 884.0,518.4 887.8,518.9 891.5,522.3 895.3,525.1 899.1,535.8 902.9,509.8 906.7,511.7 910.5,516.8 914.3,527.1 918.1,520.6 921.8,524.4 925.6,508.1 929.4,501.0 933.2,506.5" fill="none" stroke="#7e57c2" stroke-width="1.1" stroke-linejoin="round"/>
<path d="M7.0,521.4 C7.9,521.5 9.7,522.5 12.3,521.8 C15.0,521.1 19.1,518.4 22.9,517.4 C26.7,516.4 31.8,516.3 35.2,515.6 C38.6,514.9 40.2,514.5 43.1,513.0 C46.0,511.5 49.7,509.2 52.8,506.8 C55.9,504.4 58.7,501.8 61.6,498.9 C64.5,496.0 67.5,492.1 70.4,489.2 C73.3,486.3 76.3,483.8 79.2,481.3 C82.1,478.8 85.7,476.0 88.0,474.3 C90.3,472.6 91.2,471.6 93.3,471.1 C95.3,470.7 97.1,470.9 100.3,471.6 C103.5,472.3 108.8,474.1 112.6,475.1 C116.4,476.1 119.7,477.5 123.2,477.8 C126.7,478.1 129.6,476.8 133.7,476.9 C137.8,477.0 143.7,478.8 147.8,478.7 C151.9,478.6 154.7,477.0 158.4,476.0 C162.1,475.0 165.1,472.6 170.0,472.9 C174.9,473.2 182.3,476.4 187.6,477.8 C192.9,479.2 197.0,480.1 201.7,481.3 C206.4,482.5 212.3,483.2 215.8,484.8 C219.3,486.4 218.7,488.5 222.8,491.0 C226.9,493.5 235.7,497.6 240.4,499.8 C245.1,502.0 246.6,502.3 251.0,504.2 C255.4,506.1 262.7,509.8 266.8,511.2 C270.9,512.6 271.2,511.3 275.6,512.6 C280.0,513.9 288.5,517.6 293.2,519.1 C297.9,520.6 299.3,521.7 303.7,521.4 C308.1,521.1 314.0,519.1 319.6,517.4 C325.2,515.7 332.3,512.4 337.2,511.2 C342.1,510.0 344.8,512.0 348.8,510.3 C352.8,508.6 357.3,503.3 361.1,500.7 C364.9,498.1 368.5,496.4 371.7,494.5 C374.9,492.6 377.3,491.8 380.5,489.2 C383.7,486.6 387.6,482.2 391.0,478.7 C394.4,475.2 397.8,469.6 400.7,468.1 C403.6,466.6 405.8,469.6 408.6,469.9 C411.4,470.2 414.2,469.0 417.4,469.9 C420.6,470.8 424.5,472.6 428.0,475.1 C431.5,477.6 434.7,480.8 438.5,484.8 C442.3,488.8 446.8,495.9 450.9,498.9 C455.0,501.9 459.1,502.0 463.2,503.0 C467.3,504.0 470.8,505.2 475.5,505.1 C480.2,505.0 486.0,502.7 491.3,502.1 C496.6,501.5 501.7,501.4 507.2,501.5 C512.7,501.6 519.2,501.7 524.1,502.4 C529.0,503.1 531.4,504.8 536.4,505.6 C541.4,506.4 549.0,507.2 554.0,507.4 C559.0,507.6 562.8,507.1 566.3,506.8 C569.8,506.6 571.6,508.7 575.1,505.9 C578.6,503.1 583.6,494.4 587.4,490.1 C591.2,485.9 594.5,483.3 598.0,480.4 C601.5,477.5 605.0,475.2 608.5,472.5 C612.0,469.8 616.2,465.9 619.1,464.1 C622.0,462.4 624.1,462.2 626.1,462.0 C628.1,461.8 629.0,460.9 631.4,462.8 C633.8,464.7 636.4,469.4 640.2,473.4 C644.0,477.4 649.6,482.9 654.3,486.6 C659.0,490.3 664.3,493.2 668.4,495.4 C672.5,497.6 675.3,498.8 678.9,499.8 C682.5,500.8 687.2,501.1 690.0,501.5 C692.8,501.9 693.1,501.6 695.8,502.5 C698.5,503.4 702.9,505.6 706.4,506.9 C709.9,508.2 713.2,508.6 717.0,510.4 C720.8,512.1 725.5,515.5 729.3,517.4 C733.1,519.3 736.3,520.5 739.8,521.8 C743.3,523.1 747.2,525.1 750.4,525.3 C753.6,525.4 754.8,523.3 759.2,522.7 C763.6,522.1 771.8,522.1 776.8,521.8 C781.8,521.4 784.7,520.7 789.1,520.6 C793.5,520.5 799.1,521.5 803.2,521.3 C807.3,521.1 808.7,520.0 813.7,519.2 C818.7,518.4 828.1,516.6 833.1,516.5 C838.1,516.4 839.8,518.6 843.6,518.8 C847.4,518.9 851.5,516.8 856.0,517.4 C860.5,518.0 866.8,521.4 870.4,522.7 C874.0,524.0 873.9,524.7 877.4,525.0 C880.9,525.3 887.7,524.6 891.5,524.5 C895.3,524.4 896.8,524.6 900.3,524.1 C903.8,523.6 908.8,522.0 912.6,521.3 C916.4,520.6 919.8,520.8 923.2,520.1 C926.6,519.4 931.3,517.6 932.9,517.1" fill="none" stroke="#fdd835" stroke-opacity="0.8" stroke-width="1.2" stroke-linejoin="round"/>
<text x="979" y="393.3" font-size="8.8" fill="#b2b5be" text-anchor="start" font-weight="normal" textLength="19.6" lengthAdjust="spacingAndGlyphs">0.200</text>
<text x="979" y="360.26000000000005" font-size="8.8" fill="#b2b5be" text-anchor="start" font-weight="normal" textLength="19.6" lengthAdjust="spacingAndGlyphs">0.400</text>
<text x="979" y="294.18" font-size="8.8" fill="#b2b5be" text-anchor="start" font-weight="normal" textLength="19.6" lengthAdjust="spacingAndGlyphs">0.800</text>
<text x="979" y="261.14000000000004" font-size="8.8" fill="#b2b5be" text-anchor="start" font-weight="normal" textLength="19.6" lengthAdjust="spacingAndGlyphs">1.000</text>
<text x="979" y="228.1" font-size="8.8" fill="#b2b5be" text-anchor="start" font-weight="normal" textLength="19.6" lengthAdjust="spacingAndGlyphs">1.200</text>
<text x="979" y="195.05999999999997" font-size="8.8" fill="#b2b5be" text-anchor="start" font-weight="normal" textLength="19.6" lengthAdjust="spacingAndGlyphs">1.400</text>
<text x="979" y="162.02" font-size="8.8" fill="#b2b5be" text-anchor="start" font-weight="normal" textLength="19.6" lengthAdjust="spacingAndGlyphs">1.600</text>
<text x="979" y="128.98000000000002" font-size="8.8" fill="#b2b5be" text-anchor="start" font-weight="normal" textLength="19.6" lengthAdjust="spacingAndGlyphs">1.800</text>
<text x="979" y="95.94000000000003" font-size="8.8" fill="#b2b5be" text-anchor="start" font-weight="normal" textLength="19.6" lengthAdjust="spacingAndGlyphs">2.000</text>
<text x="979" y="62.9" font-size="8.8" fill="#b2b5be" text-anchor="start" font-weight="normal" textLength="19.6" lengthAdjust="spacingAndGlyphs">2.200</text>
<text x="978.6" y="417.9" font-size="8.8" fill="#b2b5be" text-anchor="start" font-weight="normal" textLength="20.2" lengthAdjust="spacingAndGlyphs">90.00</text>
<text x="978.6" y="438.29999999999995" font-size="8.8" fill="#b2b5be" text-anchor="start" font-weight="normal" textLength="20.2" lengthAdjust="spacingAndGlyphs">80.00</text>
<text x="978.6" y="458.69999999999993" font-size="8.8" fill="#b2b5be" text-anchor="start" font-weight="normal" textLength="20.2" lengthAdjust="spacingAndGlyphs">70.00</text>
<text x="978.6" y="479.09999999999997" font-size="8.8" fill="#b2b5be" text-anchor="start" font-weight="normal" textLength="20.2" lengthAdjust="spacingAndGlyphs">60.00</text>
<text x="978.6" y="499.49999999999994" font-size="8.8" fill="#b2b5be" text-anchor="start" font-weight="normal" textLength="20.2" lengthAdjust="spacingAndGlyphs">50.00</text>
<text x="978.6" y="540.3" font-size="8.8" fill="#b2b5be" text-anchor="start" font-weight="normal" textLength="20.2" lengthAdjust="spacingAndGlyphs">30.00</text>
<text x="88.7" y="560.0" font-size="7.5" fill="#b2b5be" text-anchor="middle" font-weight="bold" >May</text>
<text x="206.4" y="560.0" font-size="7.5" fill="#b2b5be" text-anchor="middle" font-weight="bold" >Jun</text>
<text x="320" y="560.0" font-size="7.5" fill="#b2b5be" text-anchor="middle" font-weight="bold" >Jul</text>
<text x="437.3" y="560.0" font-size="7.5" fill="#b2b5be" text-anchor="middle" font-weight="bold" >Aug</text>
<text x="554.8" y="560.0" font-size="7.5" fill="#b2b5be" text-anchor="middle" font-weight="bold" >Sep</text>
<text x="668.4" y="560.0" font-size="7.5" fill="#b2b5be" text-anchor="middle" font-weight="bold" >Oct</text>
<text x="785" y="560.0" font-size="7.5" fill="#b2b5be" text-anchor="middle" font-weight="bold" >Nov</text>
<text x="899" y="560.0" font-size="7.5" fill="#b2b5be" text-anchor="middle" font-weight="bold" >Dec</text>
<rect x="973.4" y="303" width="29" height="11.2" fill="#f23645"/>
<rect x="973.4" y="314.2" width="40.5" height="20.8" fill="#f23645"/>
<rect x="973.4" y="335" width="29" height="11.7" fill="#2962ff"/>
<rect x="973.4" y="346.7" width="29" height="11.5" fill="#089981"/>
<text x="978.8" y="312.1" font-size="8.8" fill="#fff" text-anchor="start" font-weight="normal" textLength="19.8" lengthAdjust="spacingAndGlyphs">0.672</text>
<text x="978.8" y="323.5" font-size="8.8" fill="#fff" text-anchor="start" font-weight="normal" textLength="19.8" lengthAdjust="spacingAndGlyphs">0.626</text>
<text x="979.0" y="332.7" font-size="8.8" fill="#fff" text-anchor="start" font-weight="normal" textLength="30.8" lengthAdjust="spacingAndGlyphs">15:37:47</text>
<text x="978.8" y="343.9" font-size="8.8" fill="#fff" text-anchor="start" font-weight="normal" textLength="19.8" lengthAdjust="spacingAndGlyphs">0.618</text>
<text x="978.8" y="355.6" font-size="8.8" fill="#fff" text-anchor="start" font-weight="normal" textLength="19.8" lengthAdjust="spacingAndGlyphs">0.563</text>
<rect x="932.4" y="314.6" width="40.3" height="11.1" fill="#f23645" rx="1"/>
<text x="935.3" y="323.6" font-size="8.8" fill="#fff" text-anchor="start" font-weight="normal" textLength="34.1" lengthAdjust="spacingAndGlyphs">WLDUSDT</text>
<rect x="973.4" y="499" width="29" height="11" fill="#7e57c2"/>
<rect x="973.4" y="512" width="29" height="11" fill="#fdd835"/>
<text x="978.5" y="507.9" font-size="8.8" fill="#fff" text-anchor="start" font-weight="normal" textLength="20" lengthAdjust="spacingAndGlyphs">45.98</text>
<text x="978.5" y="521.0" font-size="8.8" fill="#131722" text-anchor="start" font-weight="normal" textLength="20" lengthAdjust="spacingAndGlyphs">39.65</text>
<rect x="976.5" y="20.5" width="38" height="18" rx="2.5" fill="#0f0f12" stroke="#2a2e39"/>
<text x="981" y="33.0" font-size="8.4" fill="#d1d4dc" text-anchor="start" font-weight="normal" textLength="19.4" lengthAdjust="spacingAndGlyphs">USDT</text>
<circle cx="933.3" cy="403.8" r="6.4" fill="#0d0d14" stroke="#9c27b0" stroke-width="1.5"/>
<path d="M935.3,399.7 L930.9,404.3 L933.3,404.3 L931.3,407.9 L935.7,403.1 L933.3,403.1 Z" fill="#b868cc"/>
<text x="12.2" y="31.0" font-size="8.7" fill="#c3c6ce" textLength="291.9" lengthAdjust="spacingAndGlyphs">WLD / TetherUS · 1D · Binance  <tspan fill="#c3c6ce">O</tspan><tspan fill="#f23645">0.644</tspan>  <tspan>H</tspan><tspan fill="#f23645">0.645</tspan>  <tspan>L</tspan><tspan fill="#f23645">0.624</tspan>  <tspan>C</tspan><tspan fill="#f23645">0.626</tspan>  <tspan fill="#f23645">−0.018 (−2.80%)</tspan></text>
<text x="12.2" y="42.3" font-size="8.7" fill="#c3c6ce" textLength="154" lengthAdjust="spacingAndGlyphs">BB (20, SMA, close, 2)  <tspan fill="#2962ff">0.618</tspan>  <tspan fill="#f23645">0.672</tspan>  <tspan fill="#089981">0.563</tspan></text>
<text x="12.1" y="425.4" font-size="8.2" fill="#c3c6ce" textLength="100.9" lengthAdjust="spacingAndGlyphs">RSI (14, close)  <tspan fill="#7e57c2">45.98</tspan>  <tspan fill="#fdd835">39.65</tspan></text>
<text x="6.8" y="12.8" font-size="8.8" fill="#e6e6e6" stroke="#e6e6e6" stroke-width="0.15" textLength="254.4" lengthAdjust="spacingAndGlyphs">janekananu10 created with TradingView.com, Dec 10, 2025 08:22 UTC</text>
<g transform="translate(7.9,579.8) scale(0.565)" fill="#e0e0e0"><path d="M14 22H7V11H0V4h14v18z"/><path d="M28 22h-8l7.5-18h8L28 22z"/><circle cx="20" cy="8" r="4"/></g>
<text x="33.3" y="592.6" font-size="14.6" fill="#e0e0e0" stroke="#e0e0e0" stroke-width="0.5">TradingView</text>
</svg></body></html>
